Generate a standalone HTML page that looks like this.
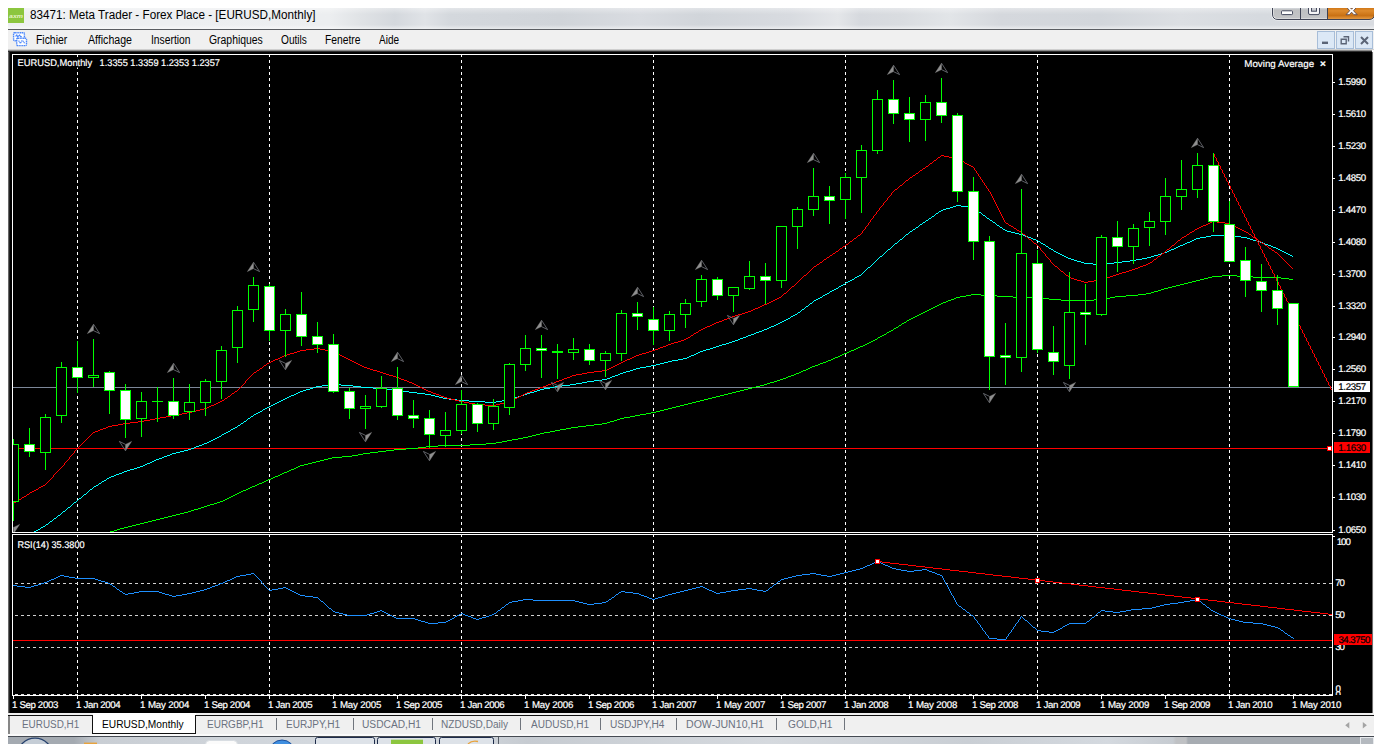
<!DOCTYPE html>
<html lang="fr"><head><meta charset="utf-8"><title>83471: Meta Trader - Forex Place - [EURUSD,Monthly]</title>
<style>
html,body{margin:0;padding:0;background:#fff;}
body{width:1382px;height:744px;position:relative;overflow:hidden;font-family:"Liberation Sans",sans-serif;}
.a{position:absolute;}
.t{position:absolute;white-space:nowrap;transform-origin:0 0;line-height:1;z-index:2;}
#title{left:8px;top:8px;width:1366px;height:21px;background:linear-gradient(180deg,rgba(255,255,255,.35) 0,rgba(255,255,255,0) 30%,rgba(255,255,255,0) 80%,rgba(255,255,255,.5) 100%),linear-gradient(90deg,#eef0f2 0px,#eceef0 322px,#e0e3e6 352px,#d4d8dd 387px,#e0e3e7 417px,#d4d8dd 442px,#d0d4d9 552px,#d9dce1 632px,#d1d5da 692px,#d8dbe0 782px,#e4e6e9 830px,#d6d9de 852px,#d9dce0 892px,#e2e5e8 942px,#d5d8dd 992px,#d2d6db 1092px,#dcdfe3 1172px,#d6dadf 1252px,#d8dbe0 1366px);}
#menu{left:8px;top:30px;width:1366px;height:20px;background:#f0f0f0;}
#mdi{left:8px;top:50px;width:1366px;height:663px;background:#000;}
#tabs{left:8px;top:713px;width:1366px;height:22px;background:#f0f0f0;}
#task{left:8px;top:736px;width:1366px;height:8px;background:linear-gradient(90deg,#a4aab1 0px,#a4aab1 66px,#c9ced4 92px,#d2d7dd 300px,#cdd2d8 480px,#c6cbd1 520px,#d5d9de 760px,#c9ced4 960px,#d4d9df 1100px,#c6cbd1 1165px,#bfc1c4 1168px,#bfc1c4 1178px,#a7acb2 1180px,#a7acb2 1352px);}
</style></head><body>
<div class="a" id="title"></div>
<div class="a" style="left:8px;top:29px;width:1366px;height:1px;background:#5a5d62"></div>
<div class="a" id="menu"></div>
<div class="a" id="mdi"></div>
<div class="a" id="tabs"></div>
<div class="a" id="task"></div>
<div class="t" style="left:29.5px;top:8.5px;font-size:12px;color:#000;transform:scaleX(0.9751)">83471: Meta Trader - Forex Place - [EURUSD,Monthly]</div>
<div class="t" style="left:36px;top:33.6px;font-size:12px;color:#000;transform:scaleX(0.8663)">Fichier</div>
<div class="t" style="left:88px;top:33.6px;font-size:12px;color:#000;transform:scaleX(0.8830)">Affichage</div>
<div class="t" style="left:151px;top:33.6px;font-size:12px;color:#000;transform:scaleX(0.8581)">Insertion</div>
<div class="t" style="left:208.6px;top:33.6px;font-size:12px;color:#000;transform:scaleX(0.8671)">Graphiques</div>
<div class="t" style="left:280.6px;top:33.6px;font-size:12px;color:#000;transform:scaleX(0.8440)">Outils</div>
<div class="t" style="left:325px;top:33.6px;font-size:12px;color:#000;transform:scaleX(0.8583)">Fenetre</div>
<div class="t" style="left:379px;top:33.6px;font-size:12px;color:#000;transform:scaleX(0.8322)">Aide</div>
<div class="t" style="left:22.2px;top:720px;font-size:10px;color:#6b7280;transform:scaleX(0.9897)">EURUSD,H1</div>
<div class="t" style="left:102px;top:720px;font-size:10px;color:#000;transform:scaleX(1.0184)">EURUSD,Monthly</div>
<div class="t" style="left:207px;top:720px;font-size:10px;color:#6b7280;transform:scaleX(0.9997)">EURGBP,H1</div>
<div class="t" style="left:286px;top:720px;font-size:10px;color:#6b7280;transform:scaleX(1.0049)">EURJPY,H1</div>
<div class="t" style="left:362px;top:720px;font-size:10px;color:#6b7280;transform:scaleX(1.0208)">USDCAD,H1</div>
<div class="t" style="left:441px;top:720px;font-size:10px;color:#6b7280;transform:scaleX(1.0049)">NZDUSD,Daily</div>
<div class="t" style="left:530.5px;top:720px;font-size:10px;color:#6b7280;transform:scaleX(1.0035)">AUDUSD,H1</div>
<div class="t" style="left:610px;top:720px;font-size:10px;color:#6b7280;transform:scaleX(1.0142)">USDJPY,H4</div>
<div class="t" style="left:686px;top:720px;font-size:10px;color:#6b7280;transform:scaleX(1.0581)">DOW-JUN10,H1</div>
<div class="t" style="left:787.5px;top:720px;font-size:10px;color:#6b7280;transform:scaleX(1.0135)">GOLD,H1</div>
<div class="a" style="left:0;top:0;width:1382px;height:744px"><svg id="ch" width="1382" height="744" viewBox="0 0 1382 744" shape-rendering="crispEdges">
<defs><clipPath id="cm"><rect x="13" y="55" width="1319" height="477"/></clipPath><clipPath id="cr"><rect x="13" y="535" width="1319" height="160"/></clipPath><linearGradient id="gb" x1="0" y1="0" x2="0" y2="1"><stop offset="0" stop-color="#d9dce0"/><stop offset=".45" stop-color="#d0d3d7"/><stop offset=".5" stop-color="#bfc0c2"/><stop offset="1" stop-color="#c4c5c7"/></linearGradient><linearGradient id="go" x1="0" y1="0" x2="0" y2="1"><stop offset="0" stop-color="#e39a3c"/><stop offset=".3" stop-color="#c86a08"/><stop offset=".55" stop-color="#dd8a2c"/><stop offset=".8" stop-color="#c97114"/><stop offset="1" stop-color="#e8a04a"/></linearGradient><linearGradient id="gl" x1="0" y1="0" x2="1" y2="0"><stop offset="0" stop-color="#8a8a8a"/><stop offset="1" stop-color="#000"/></linearGradient><linearGradient id="gr" x1="0" y1="0" x2="1" y2="0"><stop offset="0" stop-color="#000"/><stop offset="1" stop-color="#d0d0d0"/></linearGradient><linearGradient id="gt" x1="0" y1="0" x2="0" y2="1"><stop offset="0" stop-color="#f0f0f0"/><stop offset=".5" stop-color="#8c8c8c"/><stop offset="1" stop-color="#000"/></linearGradient></defs>
<rect x="8" y="49" width="1366" height="3" fill="url(#gt)" shape-rendering="auto"/>
<rect x="8" y="52" width="2" height="661" fill="url(#gl)" shape-rendering="auto"/>
<rect x="1372" y="50" width="2" height="663" fill="#fbfbfb" shape-rendering="auto"/><rect x="1371.8" y="52" width="1.3" height="661" fill="url(#gr)" shape-rendering="auto"/>
<line x1="77.5" y1="54" x2="77.5" y2="532" stroke="#fff" stroke-dasharray="3 3"/>
<line x1="77.5" y1="534" x2="77.5" y2="695" stroke="#fff" stroke-dasharray="3 3"/>
<line x1="269.5" y1="54" x2="269.5" y2="532" stroke="#fff" stroke-dasharray="3 3"/>
<line x1="269.5" y1="534" x2="269.5" y2="695" stroke="#fff" stroke-dasharray="3 3"/>
<line x1="461.5" y1="54" x2="461.5" y2="532" stroke="#fff" stroke-dasharray="3 3"/>
<line x1="461.5" y1="534" x2="461.5" y2="695" stroke="#fff" stroke-dasharray="3 3"/>
<line x1="653.5" y1="54" x2="653.5" y2="532" stroke="#fff" stroke-dasharray="3 3"/>
<line x1="653.5" y1="534" x2="653.5" y2="695" stroke="#fff" stroke-dasharray="3 3"/>
<line x1="845.5" y1="54" x2="845.5" y2="532" stroke="#fff" stroke-dasharray="3 3"/>
<line x1="845.5" y1="534" x2="845.5" y2="695" stroke="#fff" stroke-dasharray="3 3"/>
<line x1="1037.5" y1="54" x2="1037.5" y2="532" stroke="#fff" stroke-dasharray="3 3"/>
<line x1="1037.5" y1="534" x2="1037.5" y2="695" stroke="#fff" stroke-dasharray="3 3"/>
<line x1="1229.5" y1="54" x2="1229.5" y2="532" stroke="#fff" stroke-dasharray="3 3"/>
<line x1="1229.5" y1="534" x2="1229.5" y2="695" stroke="#fff" stroke-dasharray="3 3"/>
<g clip-path="url(#cm)">
<line x1="13" y1="387.5" x2="1332" y2="387.5" stroke="#7c8799"/>
<line x1="13" y1="448.5" x2="1332" y2="448.5" stroke="#f00"/>
<path d="M1222 275h15v1h-15zM1212 276h10v1h-10zM1237 276h16v1h-16zM1208 277h4v1h-4zM1253 277h28v1h-28zM1204 278h4v1h-4zM1281 278h8v1h-8zM1200 279h4v1h-4zM1289 279h4v1h-4zM1196 280h4v1h-4zM1192 281h4v1h-4zM1188 282h4v1h-4zM1184 283h4v1h-4zM1180 284h4v1h-4zM1176 285h4v1h-4zM1172 286h4v1h-4zM1168 287h4v1h-4zM1164 288h4v1h-4zM1161 289h3v1h-3zM1158 290h3v1h-3zM1154 291h4v1h-4zM1151 292h3v1h-3zM1146 293h5v1h-5zM971 294h10v1h-10zM1138 294h8v1h-8zM966 295h5v1h-5zM981 295h16v1h-16zM1126 295h12v1h-12zM960 296h6v1h-6zM997 296h16v1h-16zM1115 296h11v1h-11zM956 297h4v1h-4zM1013 297h28v1h-28zM1110 297h5v1h-5zM954 298h2v1h-2zM1041 298h8v1h-8zM1104 298h6v1h-6zM951 299h3v1h-3zM1049 299h12v1h-12zM1094 299h10v1h-10zM948 300h3v1h-3zM1061 300h33v1h-33zM946 301h2v1h-2zM943 302h3v1h-3zM941 303h2v1h-2zM939 304h2v1h-2zM937 305h2v1h-2zM935 306h2v1h-2zM933 307h2v1h-2zM931 308h2v1h-2zM929 309h2v1h-2zM927 310h2v1h-2zM925 311h2v1h-2zM923 312h2v1h-2zM921 313h2v1h-2zM919 314h2v1h-2zM917 315h2v1h-2zM915 316h2v1h-2zM913 317h2v1h-2zM911 318h2v1h-2zM909 319h2v1h-2zM907 320h2v1h-2zM906 321h1v1h-1zM904 322h2v1h-2zM902 323h2v1h-2zM901 324h1v1h-1zM899 325h2v1h-2zM898 326h1v1h-1zM896 327h2v1h-2zM894 328h2v1h-2zM893 329h1v1h-1zM891 330h2v1h-2zM889 331h2v1h-2zM887 332h2v1h-2zM886 333h1v1h-1zM884 334h2v1h-2zM882 335h2v1h-2zM880 336h2v1h-2zM878 337h2v1h-2zM877 338h1v1h-1zM875 339h2v1h-2zM873 340h2v1h-2zM871 341h2v1h-2zM869 342h2v1h-2zM867 343h2v1h-2zM865 344h2v1h-2zM863 345h2v1h-2zM860 346h3v1h-3zM858 347h2v1h-2zM856 348h2v1h-2zM854 349h2v1h-2zM851 350h3v1h-3zM849 351h2v1h-2zM847 352h2v1h-2zM844 353h3v1h-3zM842 354h2v1h-2zM840 355h2v1h-2zM838 356h2v1h-2zM835 357h3v1h-3zM833 358h2v1h-2zM831 359h2v1h-2zM828 360h3v1h-3zM826 361h2v1h-2zM823 362h3v1h-3zM820 363h3v1h-3zM818 364h2v1h-2zM815 365h3v1h-3zM812 366h3v1h-3zM810 367h2v1h-2zM808 368h2v1h-2zM806 369h2v1h-2zM803 370h3v1h-3zM801 371h2v1h-2zM799 372h2v1h-2zM796 373h3v1h-3zM794 374h2v1h-2zM791 375h3v1h-3zM788 376h3v1h-3zM786 377h2v1h-2zM783 378h3v1h-3zM780 379h3v1h-3zM777 380h3v1h-3zM774 381h3v1h-3zM770 382h4v1h-4zM767 383h3v1h-3zM764 384h3v1h-3zM760 385h4v1h-4zM756 386h4v1h-4zM752 387h4v1h-4zM748 388h4v1h-4zM744 389h4v1h-4zM740 390h4v1h-4zM736 391h4v1h-4zM732 392h4v1h-4zM728 393h4v1h-4zM724 394h4v1h-4zM720 395h4v1h-4zM716 396h4v1h-4zM712 397h4v1h-4zM708 398h4v1h-4zM704 399h4v1h-4zM700 400h4v1h-4zM696 401h4v1h-4zM692 402h4v1h-4zM688 403h4v1h-4zM684 404h4v1h-4zM680 405h4v1h-4zM676 406h4v1h-4zM672 407h4v1h-4zM668 408h4v1h-4zM664 409h4v1h-4zM660 410h4v1h-4zM656 411h4v1h-4zM651 412h5v1h-5zM646 413h5v1h-5zM640 414h6v1h-6zM635 415h5v1h-5zM630 416h5v1h-5zM624 417h6v1h-6zM620 418h4v1h-4zM617 419h3v1h-3zM614 420h3v1h-3zM610 421h4v1h-4zM607 422h3v1h-3zM602 423h5v1h-5zM594 424h8v1h-8zM586 425h8v1h-8zM578 426h8v1h-8zM571 427h7v1h-7zM566 428h5v1h-5zM560 429h6v1h-6zM555 430h5v1h-5zM550 431h5v1h-5zM544 432h6v1h-6zM540 433h4v1h-4zM536 434h4v1h-4zM532 435h4v1h-4zM528 436h4v1h-4zM523 437h5v1h-5zM518 438h5v1h-5zM512 439h6v1h-6zM507 440h5v1h-5zM502 441h5v1h-5zM496 442h6v1h-6zM486 443h10v1h-10zM470 444h16v1h-16zM438 445h32v1h-32zM426 446h12v1h-12zM418 447h8v1h-8zM406 448h12v1h-12zM394 449h12v1h-12zM386 450h8v1h-8zM378 451h8v1h-8zM370 452h8v1h-8zM363 453h7v1h-7zM358 454h5v1h-5zM352 455h6v1h-6zM342 456h10v1h-10zM332 457h10v1h-10zM328 458h4v1h-4zM324 459h4v1h-4zM320 460h4v1h-4zM316 461h4v1h-4zM312 462h4v1h-4zM308 463h4v1h-4zM304 464h4v1h-4zM300 465h4v1h-4zM298 466h2v1h-2zM296 467h2v1h-2zM294 468h2v1h-2zM291 469h3v1h-3zM289 470h2v1h-2zM287 471h2v1h-2zM284 472h3v1h-3zM282 473h2v1h-2zM280 474h2v1h-2zM278 475h2v1h-2zM275 476h3v1h-3zM273 477h2v1h-2zM271 478h2v1h-2zM268 479h3v1h-3zM266 480h2v1h-2zM264 481h2v1h-2zM262 482h2v1h-2zM259 483h3v1h-3zM257 484h2v1h-2zM255 485h2v1h-2zM252 486h3v1h-3zM250 487h2v1h-2zM248 488h2v1h-2zM246 489h2v1h-2zM243 490h3v1h-3zM241 491h2v1h-2zM239 492h2v1h-2zM237 493h2v1h-2zM235 494h2v1h-2zM233 495h2v1h-2zM231 496h2v1h-2zM229 497h2v1h-2zM227 498h2v1h-2zM225 499h2v1h-2zM223 500h2v1h-2zM220 501h3v1h-3zM217 502h3v1h-3zM214 503h3v1h-3zM210 504h4v1h-4zM207 505h3v1h-3zM204 506h3v1h-3zM201 507h3v1h-3zM198 508h3v1h-3zM194 509h4v1h-4zM191 510h3v1h-3zM188 511h3v1h-3zM184 512h4v1h-4zM180 513h4v1h-4zM176 514h4v1h-4zM172 515h4v1h-4zM168 516h4v1h-4zM164 517h4v1h-4zM160 518h4v1h-4zM156 519h4v1h-4zM152 520h4v1h-4zM148 521h4v1h-4zM144 522h4v1h-4zM140 523h4v1h-4zM136 524h4v1h-4zM132 525h4v1h-4zM128 526h4v1h-4zM124 527h4v1h-4zM120 528h4v1h-4zM117 529h3v1h-3zM114 530h3v1h-3zM110 531h4v1h-4zM108 532h2v1h-2z" fill="#0f0"/>
<path d="M956 205h5v1h-5zM953 206h3v1h-3zM961 206h8v1h-8zM950 207h3v1h-3zM969 207h5v1h-5zM946 208h4v1h-4zM974 208h1v1h-1zM943 209h3v1h-3zM975 209h2v1h-2zM941 210h2v1h-2zM977 210h1v1h-1zM939 211h2v1h-2zM978 211h1v1h-1zM938 212h1v1h-1zM979 212h2v1h-2zM936 213h2v1h-2zM981 213h1v1h-1zM935 214h1v1h-1zM982 214h1v1h-1zM934 215h1v1h-1zM983 215h2v1h-2zM932 216h2v1h-2zM985 216h1v1h-1zM931 217h1v1h-1zM986 217h1v1h-1zM929 218h2v1h-2zM987 218h2v1h-2zM928 219h1v1h-1zM989 219h1v1h-1zM926 220h2v1h-2zM990 220h2v1h-2zM925 221h1v1h-1zM992 221h1v1h-1zM923 222h2v1h-2zM993 222h2v1h-2zM922 223h1v1h-1zM995 223h1v1h-1zM920 224h2v1h-2zM996 224h1v1h-1zM919 225h1v1h-1zM997 225h2v1h-2zM918 226h1v1h-1zM999 226h1v1h-1zM916 227h2v1h-2zM1000 227h2v1h-2zM915 228h1v1h-1zM1002 228h1v1h-1zM913 229h2v1h-2zM1003 229h2v1h-2zM912 230h1v1h-1zM1005 230h2v1h-2zM910 231h2v1h-2zM1007 231h4v1h-4zM909 232h1v1h-1zM1011 232h4v1h-4zM908 233h1v1h-1zM1015 233h4v1h-4zM906 234h2v1h-2zM1019 234h4v1h-4zM905 235h1v1h-1zM1023 235h2v1h-2zM1211 235h22v1h-22zM904 236h1v1h-1zM1025 236h3v1h-3zM1206 236h5v1h-5zM1233 236h8v1h-8zM903 237h1v1h-1zM1028 237h3v1h-3zM1200 237h6v1h-6zM1241 237h6v1h-6zM902 238h1v1h-1zM1031 238h2v1h-2zM1196 238h4v1h-4zM1247 238h3v1h-3zM900 239h2v1h-2zM1033 239h3v1h-3zM1194 239h2v1h-2zM1250 239h3v1h-3zM899 240h1v1h-1zM1036 240h2v1h-2zM1192 240h2v1h-2zM1253 240h4v1h-4zM898 241h1v1h-1zM1038 241h2v1h-2zM1190 241h2v1h-2zM1257 241h3v1h-3zM897 242h1v1h-1zM1040 242h1v1h-1zM1187 242h3v1h-3zM1260 242h3v1h-3zM895 243h2v1h-2zM1041 243h2v1h-2zM1185 243h2v1h-2zM1263 243h2v1h-2zM894 244h1v1h-1zM1043 244h2v1h-2zM1183 244h2v1h-2zM1265 244h3v1h-3zM893 245h1v1h-1zM1045 245h1v1h-1zM1180 245h3v1h-3zM1268 245h3v1h-3zM892 246h1v1h-1zM1046 246h2v1h-2zM1178 246h2v1h-2zM1271 246h2v1h-2zM891 247h1v1h-1zM1048 247h1v1h-1zM1176 247h2v1h-2zM1273 247h3v1h-3zM890 248h1v1h-1zM1049 248h2v1h-2zM1174 248h2v1h-2zM1276 248h2v1h-2zM888 249h2v1h-2zM1051 249h2v1h-2zM1171 249h3v1h-3zM1278 249h2v1h-2zM887 250h1v1h-1zM1053 250h1v1h-1zM1169 250h2v1h-2zM1280 250h2v1h-2zM886 251h1v1h-1zM1054 251h2v1h-2zM1167 251h2v1h-2zM1282 251h2v1h-2zM885 252h1v1h-1zM1056 252h2v1h-2zM1164 252h3v1h-3zM1284 252h2v1h-2zM884 253h1v1h-1zM1058 253h2v1h-2zM1161 253h3v1h-3zM1286 253h2v1h-2zM883 254h1v1h-1zM1060 254h2v1h-2zM1158 254h3v1h-3zM1288 254h2v1h-2zM882 255h1v1h-1zM1062 255h2v1h-2zM1154 255h4v1h-4zM1290 255h2v1h-2zM880 256h2v1h-2zM1064 256h2v1h-2zM1151 256h3v1h-3zM1292 256h1v1h-1zM879 257h1v1h-1zM1066 257h2v1h-2zM1147 257h4v1h-4zM878 258h1v1h-1zM1068 258h3v1h-3zM1142 258h5v1h-5zM877 259h1v1h-1zM1071 259h3v1h-3zM1136 259h6v1h-6zM876 260h1v1h-1zM1074 260h3v1h-3zM1130 260h6v1h-6zM875 261h1v1h-1zM1077 261h4v1h-4zM1122 261h8v1h-8zM874 262h1v1h-1zM1081 262h3v1h-3zM1114 262h8v1h-8zM873 263h1v1h-1zM1084 263h9v1h-9zM1106 263h8v1h-8zM872 264h1v1h-1zM1093 264h13v1h-13zM871 265h1v1h-1zM870 266h1v1h-1zM868 267h2v1h-2zM867 268h1v1h-1zM866 269h1v1h-1zM865 270h1v1h-1zM864 271h1v1h-1zM863 272h1v1h-1zM862 273h1v1h-1zM861 274h1v1h-1zM859 275h2v1h-2zM857 276h2v1h-2zM855 277h2v1h-2zM854 278h1v1h-1zM852 279h2v1h-2zM850 280h2v1h-2zM848 281h2v1h-2zM846 282h2v1h-2zM845 283h1v1h-1zM843 284h2v1h-2zM841 285h2v1h-2zM839 286h2v1h-2zM838 287h1v1h-1zM836 288h2v1h-2zM834 289h2v1h-2zM832 290h2v1h-2zM830 291h2v1h-2zM829 292h1v1h-1zM827 293h2v1h-2zM825 294h2v1h-2zM823 295h2v1h-2zM822 296h1v1h-1zM820 297h2v1h-2zM818 298h2v1h-2zM816 299h2v1h-2zM814 300h2v1h-2zM813 301h1v1h-1zM812 302h1v1h-1zM810 303h2v1h-2zM809 304h1v1h-1zM808 305h1v1h-1zM806 306h2v1h-2zM805 307h1v1h-1zM804 308h1v1h-1zM802 309h2v1h-2zM801 310h1v1h-1zM800 311h1v1h-1zM798 312h2v1h-2zM797 313h1v1h-1zM795 314h2v1h-2zM793 315h2v1h-2zM791 316h2v1h-2zM790 317h1v1h-1zM788 318h2v1h-2zM786 319h2v1h-2zM784 320h2v1h-2zM782 321h2v1h-2zM780 322h2v1h-2zM778 323h2v1h-2zM776 324h2v1h-2zM774 325h2v1h-2zM771 326h3v1h-3zM769 327h2v1h-2zM767 328h2v1h-2zM764 329h3v1h-3zM762 330h2v1h-2zM759 331h3v1h-3zM756 332h3v1h-3zM754 333h2v1h-2zM751 334h3v1h-3zM748 335h3v1h-3zM746 336h2v1h-2zM743 337h3v1h-3zM740 338h3v1h-3zM738 339h2v1h-2zM735 340h3v1h-3zM732 341h3v1h-3zM729 342h3v1h-3zM726 343h3v1h-3zM722 344h4v1h-4zM719 345h3v1h-3zM716 346h3v1h-3zM713 347h3v1h-3zM710 348h3v1h-3zM706 349h4v1h-4zM703 350h3v1h-3zM700 351h3v1h-3zM698 352h2v1h-2zM696 353h2v1h-2zM694 354h2v1h-2zM691 355h3v1h-3zM689 356h2v1h-2zM687 357h2v1h-2zM683 358h4v1h-4zM678 359h5v1h-5zM672 360h6v1h-6zM668 361h4v1h-4zM664 362h4v1h-4zM660 363h4v1h-4zM656 364h4v1h-4zM651 365h5v1h-5zM646 366h5v1h-5zM640 367h6v1h-6zM636 368h4v1h-4zM633 369h3v1h-3zM630 370h3v1h-3zM626 371h4v1h-4zM623 372h3v1h-3zM620 373h3v1h-3zM618 374h2v1h-2zM615 375h3v1h-3zM612 376h3v1h-3zM610 377h2v1h-2zM607 378h3v1h-3zM602 379h5v1h-5zM594 380h8v1h-8zM587 381h7v1h-7zM582 382h5v1h-5zM576 383h6v1h-6zM330 384h11v1h-11zM570 384h6v1h-6zM322 385h8v1h-8zM341 385h12v1h-12zM562 385h8v1h-8zM316 386h6v1h-6zM353 386h8v1h-8zM555 386h7v1h-7zM313 387h3v1h-3zM361 387h12v1h-12zM550 387h5v1h-5zM310 388h3v1h-3zM373 388h12v1h-12zM544 388h6v1h-6zM306 389h4v1h-4zM385 389h8v1h-8zM540 389h4v1h-4zM303 390h3v1h-3zM393 390h8v1h-8zM537 390h3v1h-3zM300 391h3v1h-3zM401 391h8v1h-8zM534 391h3v1h-3zM298 392h2v1h-2zM409 392h8v1h-8zM530 392h4v1h-4zM296 393h2v1h-2zM417 393h8v1h-8zM527 393h3v1h-3zM294 394h2v1h-2zM425 394h6v1h-6zM524 394h3v1h-3zM291 395h3v1h-3zM431 395h4v1h-4zM521 395h3v1h-3zM289 396h2v1h-2zM435 396h4v1h-4zM518 396h3v1h-3zM287 397h2v1h-2zM439 397h4v1h-4zM514 397h4v1h-4zM285 398h2v1h-2zM443 398h6v1h-6zM511 398h3v1h-3zM283 399h2v1h-2zM449 399h8v1h-8zM507 399h4v1h-4zM281 400h2v1h-2zM457 400h12v1h-12zM502 400h5v1h-5zM279 401h2v1h-2zM469 401h16v1h-16zM496 401h6v1h-6zM277 402h2v1h-2zM485 402h11v1h-11zM275 403h2v1h-2zM273 404h2v1h-2zM271 405h2v1h-2zM269 406h2v1h-2zM267 407h2v1h-2zM265 408h2v1h-2zM263 409h2v1h-2zM262 410h1v1h-1zM260 411h2v1h-2zM258 412h2v1h-2zM256 413h2v1h-2zM254 414h2v1h-2zM253 415h1v1h-1zM251 416h2v1h-2zM250 417h1v1h-1zM248 418h2v1h-2zM247 419h1v1h-1zM246 420h1v1h-1zM244 421h2v1h-2zM243 422h1v1h-1zM241 423h2v1h-2zM240 424h1v1h-1zM238 425h2v1h-2zM237 426h1v1h-1zM235 427h2v1h-2zM233 428h2v1h-2zM231 429h2v1h-2zM230 430h1v1h-1zM228 431h2v1h-2zM226 432h2v1h-2zM224 433h2v1h-2zM222 434h2v1h-2zM221 435h1v1h-1zM219 436h2v1h-2zM217 437h2v1h-2zM215 438h2v1h-2zM213 439h2v1h-2zM211 440h2v1h-2zM209 441h2v1h-2zM207 442h2v1h-2zM204 443h3v1h-3zM202 444h2v1h-2zM199 445h3v1h-3zM196 446h3v1h-3zM194 447h2v1h-2zM191 448h3v1h-3zM188 449h3v1h-3zM184 450h4v1h-4zM180 451h4v1h-4zM176 452h4v1h-4zM172 453h4v1h-4zM170 454h2v1h-2zM167 455h3v1h-3zM164 456h3v1h-3zM162 457h2v1h-2zM159 458h3v1h-3zM156 459h3v1h-3zM154 460h2v1h-2zM152 461h2v1h-2zM150 462h2v1h-2zM147 463h3v1h-3zM145 464h2v1h-2zM143 465h2v1h-2zM140 466h3v1h-3zM137 467h3v1h-3zM134 468h3v1h-3zM130 469h4v1h-4zM127 470h3v1h-3zM124 471h3v1h-3zM122 472h2v1h-2zM119 473h3v1h-3zM116 474h3v1h-3zM114 475h2v1h-2zM111 476h3v1h-3zM109 477h2v1h-2zM107 478h2v1h-2zM106 479h1v1h-1zM104 480h2v1h-2zM102 481h2v1h-2zM101 482h1v1h-1zM99 483h2v1h-2zM98 484h1v1h-1zM96 485h2v1h-2zM94 486h2v1h-2zM93 487h1v1h-1zM92 488h1v1h-1zM90 489h2v1h-2zM89 490h1v1h-1zM88 491h1v1h-1zM87 492h1v1h-1zM86 493h1v1h-1zM84 494h2v1h-2zM83 495h1v1h-1zM82 496h1v1h-1zM81 497h1v1h-1zM79 498h2v1h-2zM78 499h1v1h-1zM77 500h1v1h-1zM76 501h1v1h-1zM74 502h2v1h-2zM73 503h1v1h-1zM72 504h1v1h-1zM71 505h1v1h-1zM70 506h1v1h-1zM68 507h2v1h-2zM67 508h1v1h-1zM66 509h1v1h-1zM65 510h1v1h-1zM63 511h2v1h-2zM62 512h1v1h-1zM61 513h1v1h-1zM60 514h1v1h-1zM58 515h2v1h-2zM57 516h1v1h-1zM56 517h1v1h-1zM54 518h2v1h-2zM53 519h1v1h-1zM52 520h1v1h-1zM50 521h2v1h-2zM49 522h1v1h-1zM48 523h1v1h-1zM46 524h2v1h-2zM45 525h1v1h-1zM43 526h2v1h-2zM41 527h2v1h-2zM40 528h1v1h-1zM38 529h2v1h-2zM36 530h2v1h-2zM34 531h2v1h-2zM33 532h1v1h-1z" fill="#0ff"/>
<path d="M941 155h3v1h-3zM940 156h1v1h-1zM944 156h5v1h-5zM938 157h2v1h-2zM949 157h6v1h-6zM937 158h1v1h-1zM955 158h3v1h-3zM936 159h1v1h-1zM958 159h2v1h-2zM934 160h2v1h-2zM960 160h2v1h-2zM933 161h1v1h-1zM962 161h2v1h-2zM932 162h1v1h-1zM964 162h1v1h-1zM930 163h2v1h-2zM965 163h2v1h-2zM929 164h1v1h-1zM967 164h2v1h-2zM928 165h1v1h-1zM969 165h2v1h-2zM926 166h2v1h-2zM971 166h2v1h-2zM925 167h1v1h-1zM973 167h1v1h-1zM923 168h2v1h-2zM974 168h1v1h-1zM922 169h1v1h-1zM974 169h1v1h-1zM920 170h2v1h-2zM975 170h1v1h-1zM919 171h1v1h-1zM976 171h1v1h-1zM918 172h1v1h-1zM976 172h1v1h-1zM916 173h2v1h-2zM977 173h1v1h-1zM915 174h1v1h-1zM978 174h1v1h-1zM913 175h2v1h-2zM978 175h1v1h-1zM912 176h1v1h-1zM979 176h1v1h-1zM910 177h2v1h-2zM980 177h1v1h-1zM909 178h1v1h-1zM980 178h1v1h-1zM908 179h1v1h-1zM981 179h1v1h-1zM906 180h2v1h-2zM982 180h1v1h-1zM905 181h1v1h-1zM982 181h1v1h-1zM904 182h1v1h-1zM983 182h1v1h-1zM903 183h1v1h-1zM984 183h1v1h-1zM902 184h1v1h-1zM984 184h1v1h-1zM900 185h2v1h-2zM985 185h1v1h-1zM899 186h1v1h-1zM986 186h1v1h-1zM898 187h1v1h-1zM986 187h1v1h-1zM897 188h1v1h-1zM987 188h1v1h-1zM895 189h2v1h-2zM988 189h1v1h-1zM894 190h1v1h-1zM988 190h1v1h-1zM893 191h1v1h-1zM989 191h1v1h-1zM892 192h1v1h-1zM990 192h1v1h-1zM891 193h1v1h-1zM990 193h1v1h-1zM891 194h1v1h-1zM991 194h1v1h-1zM890 195h1v1h-1zM991 195h1v1h-1zM889 196h1v1h-1zM992 196h1v1h-1zM888 197h1v1h-1zM992 197h1v1h-1zM887 198h1v1h-1zM993 198h1v1h-1zM887 199h1v1h-1zM993 199h1v1h-1zM886 200h1v1h-1zM994 200h1v1h-1zM885 201h1v1h-1zM994 201h1v1h-1zM884 202h1v1h-1zM995 202h1v1h-1zM883 203h1v1h-1zM995 203h1v1h-1zM883 204h1v1h-1zM996 204h1v1h-1zM882 205h1v1h-1zM996 205h1v1h-1zM881 206h1v1h-1zM997 206h1v1h-1zM880 207h1v1h-1zM997 207h1v1h-1zM879 208h1v1h-1zM998 208h1v1h-1zM879 209h1v1h-1zM998 209h1v1h-1zM878 210h1v1h-1zM999 210h1v1h-1zM877 211h1v1h-1zM999 211h1v1h-1zM876 212h1v1h-1zM1000 212h1v1h-1zM876 213h1v1h-1zM1000 213h1v1h-1zM875 214h1v1h-1zM1001 214h1v1h-1zM874 215h1v1h-1zM1001 215h1v1h-1zM873 216h1v1h-1zM1002 216h1v1h-1zM873 217h1v1h-1zM1002 217h1v1h-1zM872 218h1v1h-1zM1003 218h1v1h-1zM871 219h1v1h-1zM1003 219h1v1h-1zM870 220h1v1h-1zM1004 220h1v1h-1zM870 221h1v1h-1zM1004 221h1v1h-1zM1212 221h5v1h-5zM869 222h1v1h-1zM1005 222h1v1h-1zM1210 222h2v1h-2zM1217 222h8v1h-8zM868 223h1v1h-1zM1006 223h2v1h-2zM1208 223h2v1h-2zM1225 223h5v1h-5zM868 224h1v1h-1zM1008 224h1v1h-1zM1206 224h2v1h-2zM1230 224h2v1h-2zM867 225h1v1h-1zM1009 225h2v1h-2zM1203 225h3v1h-3zM1232 225h2v1h-2zM866 226h1v1h-1zM1011 226h2v1h-2zM1201 226h2v1h-2zM1234 226h2v1h-2zM865 227h1v1h-1zM1013 227h1v1h-1zM1199 227h2v1h-2zM1236 227h2v1h-2zM865 228h1v1h-1zM1014 228h2v1h-2zM1197 228h2v1h-2zM1238 228h2v1h-2zM864 229h1v1h-1zM1016 229h1v1h-1zM1195 229h2v1h-2zM1240 229h2v1h-2zM863 230h1v1h-1zM1017 230h2v1h-2zM1194 230h1v1h-1zM1242 230h2v1h-2zM862 231h1v1h-1zM1019 231h2v1h-2zM1192 231h2v1h-2zM1244 231h2v1h-2zM862 232h1v1h-1zM1021 232h1v1h-1zM1190 232h2v1h-2zM1246 232h2v1h-2zM861 233h1v1h-1zM1022 233h1v1h-1zM1189 233h1v1h-1zM1248 233h1v1h-1zM860 234h1v1h-1zM1023 234h2v1h-2zM1187 234h2v1h-2zM1249 234h2v1h-2zM858 235h2v1h-2zM1025 235h1v1h-1zM1186 235h1v1h-1zM1251 235h1v1h-1zM857 236h1v1h-1zM1026 236h1v1h-1zM1184 236h2v1h-2zM1252 236h1v1h-1zM856 237h1v1h-1zM1027 237h1v1h-1zM1182 237h2v1h-2zM1253 237h2v1h-2zM854 238h2v1h-2zM1028 238h1v1h-1zM1181 238h1v1h-1zM1255 238h1v1h-1zM853 239h1v1h-1zM1029 239h2v1h-2zM1180 239h1v1h-1zM1256 239h2v1h-2zM852 240h1v1h-1zM1031 240h1v1h-1zM1178 240h2v1h-2zM1258 240h1v1h-1zM850 241h2v1h-2zM1032 241h1v1h-1zM1177 241h1v1h-1zM1259 241h2v1h-2zM849 242h1v1h-1zM1033 242h1v1h-1zM1176 242h1v1h-1zM1261 242h1v1h-1zM848 243h1v1h-1zM1034 243h2v1h-2zM1175 243h1v1h-1zM1262 243h2v1h-2zM846 244h2v1h-2zM1036 244h1v1h-1zM1174 244h1v1h-1zM1264 244h1v1h-1zM845 245h1v1h-1zM1037 245h1v1h-1zM1172 245h2v1h-2zM1265 245h2v1h-2zM843 246h2v1h-2zM1038 246h1v1h-1zM1171 246h1v1h-1zM1267 246h1v1h-1zM842 247h1v1h-1zM1039 247h1v1h-1zM1170 247h1v1h-1zM1268 247h1v1h-1zM840 248h2v1h-2zM1040 248h1v1h-1zM1169 248h1v1h-1zM1269 248h2v1h-2zM839 249h1v1h-1zM1040 249h1v1h-1zM1167 249h2v1h-2zM1271 249h1v1h-1zM838 250h1v1h-1zM1041 250h1v1h-1zM1166 250h1v1h-1zM1272 250h2v1h-2zM836 251h2v1h-2zM1042 251h1v1h-1zM1165 251h1v1h-1zM1274 251h1v1h-1zM835 252h1v1h-1zM1043 252h1v1h-1zM1164 252h1v1h-1zM1275 252h2v1h-2zM833 253h2v1h-2zM1044 253h1v1h-1zM1162 253h2v1h-2zM1277 253h1v1h-1zM832 254h1v1h-1zM1045 254h1v1h-1zM1161 254h1v1h-1zM1278 254h1v1h-1zM830 255h2v1h-2zM1045 255h1v1h-1zM1160 255h1v1h-1zM1279 255h1v1h-1zM829 256h1v1h-1zM1046 256h1v1h-1zM1158 256h2v1h-2zM1280 256h1v1h-1zM827 257h2v1h-2zM1047 257h1v1h-1zM1157 257h1v1h-1zM1281 257h1v1h-1zM826 258h1v1h-1zM1048 258h1v1h-1zM1156 258h1v1h-1zM1282 258h1v1h-1zM824 259h2v1h-2zM1049 259h1v1h-1zM1154 259h2v1h-2zM1283 259h1v1h-1zM823 260h1v1h-1zM1050 260h1v1h-1zM1153 260h1v1h-1zM1284 260h1v1h-1zM822 261h1v1h-1zM1050 261h1v1h-1zM1152 261h1v1h-1zM1285 261h1v1h-1zM820 262h2v1h-2zM1051 262h1v1h-1zM1150 262h2v1h-2zM1286 262h1v1h-1zM819 263h1v1h-1zM1052 263h1v1h-1zM1148 263h2v1h-2zM1287 263h1v1h-1zM817 264h2v1h-2zM1053 264h1v1h-1zM1146 264h2v1h-2zM1288 264h1v1h-1zM816 265h1v1h-1zM1054 265h1v1h-1zM1143 265h3v1h-3zM1289 265h1v1h-1zM814 266h2v1h-2zM1055 266h2v1h-2zM1140 266h3v1h-3zM1290 266h1v1h-1zM813 267h1v1h-1zM1057 267h1v1h-1zM1138 267h2v1h-2zM1291 267h1v1h-1zM812 268h1v1h-1zM1058 268h1v1h-1zM1135 268h3v1h-3zM1292 268h1v1h-1zM811 269h1v1h-1zM1059 269h1v1h-1zM1132 269h3v1h-3zM810 270h1v1h-1zM1060 270h1v1h-1zM1129 270h3v1h-3zM809 271h1v1h-1zM1061 271h2v1h-2zM1126 271h3v1h-3zM808 272h1v1h-1zM1063 272h1v1h-1zM1122 272h4v1h-4zM807 273h1v1h-1zM1064 273h1v1h-1zM1119 273h3v1h-3zM806 274h1v1h-1zM1065 274h1v1h-1zM1116 274h3v1h-3zM804 275h2v1h-2zM1066 275h2v1h-2zM1113 275h3v1h-3zM803 276h1v1h-1zM1068 276h1v1h-1zM1110 276h3v1h-3zM802 277h1v1h-1zM1069 277h2v1h-2zM1106 277h4v1h-4zM801 278h1v1h-1zM1071 278h3v1h-3zM1103 278h3v1h-3zM800 279h1v1h-1zM1074 279h3v1h-3zM1099 279h4v1h-4zM799 280h1v1h-1zM1077 280h4v1h-4zM1094 280h5v1h-5zM798 281h1v1h-1zM1081 281h3v1h-3zM1088 281h6v1h-6zM797 282h1v1h-1zM1084 282h4v1h-4zM796 283h1v1h-1zM795 284h1v1h-1zM794 285h1v1h-1zM792 286h2v1h-2zM791 287h1v1h-1zM790 288h1v1h-1zM789 289h1v1h-1zM788 290h1v1h-1zM787 291h1v1h-1zM786 292h1v1h-1zM784 293h2v1h-2zM783 294h1v1h-1zM782 295h1v1h-1zM781 296h1v1h-1zM779 297h2v1h-2zM777 298h2v1h-2zM775 299h2v1h-2zM773 300h2v1h-2zM771 301h2v1h-2zM769 302h2v1h-2zM767 303h2v1h-2zM764 304h3v1h-3zM762 305h2v1h-2zM760 306h2v1h-2zM758 307h2v1h-2zM755 308h3v1h-3zM753 309h2v1h-2zM751 310h2v1h-2zM748 311h3v1h-3zM745 312h3v1h-3zM742 313h3v1h-3zM738 314h4v1h-4zM735 315h3v1h-3zM732 316h3v1h-3zM730 317h2v1h-2zM727 318h3v1h-3zM724 319h3v1h-3zM722 320h2v1h-2zM719 321h3v1h-3zM716 322h3v1h-3zM714 323h2v1h-2zM712 324h2v1h-2zM710 325h2v1h-2zM707 326h3v1h-3zM705 327h2v1h-2zM703 328h2v1h-2zM701 329h2v1h-2zM699 330h2v1h-2zM698 331h1v1h-1zM696 332h2v1h-2zM694 333h2v1h-2zM693 334h1v1h-1zM691 335h2v1h-2zM690 336h1v1h-1zM688 337h2v1h-2zM686 338h2v1h-2zM684 339h2v1h-2zM681 340h3v1h-3zM678 341h3v1h-3zM674 342h4v1h-4zM671 343h3v1h-3zM668 344h3v1h-3zM666 345h2v1h-2zM663 346h3v1h-3zM660 347h3v1h-3zM314 348h6v1h-6zM658 348h2v1h-2zM306 349h8v1h-8zM320 349h5v1h-5zM655 349h3v1h-3zM300 350h6v1h-6zM325 350h6v1h-6zM652 350h3v1h-3zM297 351h3v1h-3zM331 351h3v1h-3zM649 351h3v1h-3zM294 352h3v1h-3zM334 352h2v1h-2zM646 352h3v1h-3zM290 353h4v1h-4zM336 353h2v1h-2zM642 353h4v1h-4zM287 354h3v1h-3zM338 354h2v1h-2zM639 354h3v1h-3zM284 355h3v1h-3zM340 355h2v1h-2zM636 355h3v1h-3zM282 356h2v1h-2zM342 356h2v1h-2zM634 356h2v1h-2zM280 357h2v1h-2zM344 357h2v1h-2zM632 357h2v1h-2zM278 358h2v1h-2zM346 358h2v1h-2zM630 358h2v1h-2zM275 359h3v1h-3zM348 359h2v1h-2zM627 359h3v1h-3zM273 360h2v1h-2zM350 360h2v1h-2zM625 360h2v1h-2zM271 361h2v1h-2zM352 361h2v1h-2zM623 361h2v1h-2zM269 362h2v1h-2zM354 362h2v1h-2zM621 362h2v1h-2zM267 363h2v1h-2zM356 363h2v1h-2zM619 363h2v1h-2zM266 364h1v1h-1zM358 364h2v1h-2zM617 364h2v1h-2zM264 365h2v1h-2zM360 365h2v1h-2zM615 365h2v1h-2zM263 366h1v1h-1zM362 366h2v1h-2zM613 366h2v1h-2zM262 367h1v1h-1zM364 367h3v1h-3zM611 367h2v1h-2zM260 368h2v1h-2zM367 368h3v1h-3zM609 368h2v1h-2zM259 369h1v1h-1zM370 369h3v1h-3zM607 369h2v1h-2zM257 370h2v1h-2zM373 370h4v1h-4zM602 370h5v1h-5zM256 371h1v1h-1zM377 371h3v1h-3zM594 371h8v1h-8zM254 372h2v1h-2zM380 372h3v1h-3zM587 372h7v1h-7zM253 373h1v1h-1zM383 373h3v1h-3zM582 373h5v1h-5zM252 374h1v1h-1zM386 374h3v1h-3zM576 374h6v1h-6zM251 375h1v1h-1zM389 375h4v1h-4zM572 375h4v1h-4zM250 376h1v1h-1zM393 376h3v1h-3zM570 376h2v1h-2zM249 377h1v1h-1zM396 377h3v1h-3zM567 377h3v1h-3zM248 378h1v1h-1zM399 378h2v1h-2zM564 378h3v1h-3zM247 379h1v1h-1zM401 379h3v1h-3zM562 379h2v1h-2zM246 380h1v1h-1zM404 380h3v1h-3zM559 380h3v1h-3zM245 381h1v1h-1zM407 381h2v1h-2zM556 381h3v1h-3zM245 382h1v1h-1zM409 382h3v1h-3zM554 382h2v1h-2zM244 383h1v1h-1zM412 383h2v1h-2zM551 383h3v1h-3zM243 384h1v1h-1zM414 384h2v1h-2zM548 384h3v1h-3zM242 385h1v1h-1zM416 385h2v1h-2zM546 385h2v1h-2zM241 386h1v1h-1zM418 386h2v1h-2zM543 386h3v1h-3zM240 387h1v1h-1zM420 387h2v1h-2zM540 387h3v1h-3zM239 388h1v1h-1zM422 388h2v1h-2zM538 388h2v1h-2zM238 389h1v1h-1zM424 389h2v1h-2zM535 389h3v1h-3zM237 390h1v1h-1zM426 390h2v1h-2zM532 390h3v1h-3zM235 391h2v1h-2zM428 391h3v1h-3zM530 391h2v1h-2zM234 392h1v1h-1zM431 392h2v1h-2zM527 392h3v1h-3zM232 393h2v1h-2zM433 393h3v1h-3zM525 393h2v1h-2zM231 394h1v1h-1zM436 394h3v1h-3zM523 394h2v1h-2zM230 395h1v1h-1zM439 395h2v1h-2zM521 395h2v1h-2zM228 396h2v1h-2zM441 396h3v1h-3zM519 396h2v1h-2zM227 397h1v1h-1zM444 397h3v1h-3zM517 397h2v1h-2zM225 398h2v1h-2zM447 398h4v1h-4zM515 398h2v1h-2zM224 399h1v1h-1zM451 399h4v1h-4zM513 399h2v1h-2zM222 400h2v1h-2zM455 400h4v1h-4zM511 400h2v1h-2zM220 401h2v1h-2zM459 401h5v1h-5zM508 401h3v1h-3zM218 402h2v1h-2zM464 402h5v1h-5zM504 402h4v1h-4zM216 403h2v1h-2zM469 403h6v1h-6zM500 403h4v1h-4zM214 404h2v1h-2zM475 404h10v1h-10zM496 404h4v1h-4zM211 405h3v1h-3zM485 405h11v1h-11zM209 406h2v1h-2zM207 407h2v1h-2zM204 408h3v1h-3zM200 409h4v1h-4zM196 410h4v1h-4zM192 411h4v1h-4zM187 412h5v1h-5zM182 413h5v1h-5zM176 414h6v1h-6zM171 415h5v1h-5zM166 416h5v1h-5zM160 417h6v1h-6zM155 418h5v1h-5zM150 419h5v1h-5zM144 420h6v1h-6zM138 421h6v1h-6zM130 422h8v1h-8zM123 423h7v1h-7zM118 424h5v1h-5zM112 425h6v1h-6zM108 426h4v1h-4zM106 427h2v1h-2zM103 428h3v1h-3zM100 429h3v1h-3zM98 430h2v1h-2zM95 431h3v1h-3zM93 432h2v1h-2zM92 433h1v1h-1zM91 434h1v1h-1zM90 435h1v1h-1zM89 436h1v1h-1zM88 437h1v1h-1zM87 438h1v1h-1zM86 439h1v1h-1zM85 440h1v1h-1zM84 441h1v1h-1zM83 442h1v1h-1zM82 443h1v1h-1zM81 444h1v1h-1zM80 445h1v1h-1zM79 446h1v1h-1zM78 447h1v1h-1zM77 448h1v1h-1zM76 449h1v1h-1zM75 450h1v1h-1zM74 451h1v1h-1zM74 452h1v1h-1zM73 453h1v1h-1zM72 454h1v1h-1zM71 455h1v1h-1zM70 456h1v1h-1zM69 457h1v1h-1zM69 458h1v1h-1zM68 459h1v1h-1zM67 460h1v1h-1zM66 461h1v1h-1zM65 462h1v1h-1zM64 463h1v1h-1zM64 464h1v1h-1zM63 465h1v1h-1zM62 466h1v1h-1zM61 467h1v1h-1zM60 468h1v1h-1zM59 469h1v1h-1zM58 470h1v1h-1zM57 471h1v1h-1zM56 472h1v1h-1zM55 473h1v1h-1zM54 474h1v1h-1zM53 475h1v1h-1zM53 476h1v1h-1zM52 477h1v1h-1zM51 478h1v1h-1zM50 479h1v1h-1zM49 480h1v1h-1zM48 481h1v1h-1zM47 482h1v1h-1zM46 483h1v1h-1zM45 484h1v1h-1zM43 485h2v1h-2zM41 486h2v1h-2zM39 487h2v1h-2zM38 488h1v1h-1zM36 489h2v1h-2zM34 490h2v1h-2zM32 491h2v1h-2zM30 492h2v1h-2zM29 493h1v1h-1zM27 494h2v1h-2zM26 495h1v1h-1zM24 496h2v1h-2zM22 497h2v1h-2zM21 498h1v1h-1zM19 499h2v1h-2zM18 500h1v1h-1zM16 501h2v1h-2zM14 502h2v1h-2zM13 503h1v1h-1z" fill="#f00"/>
<path d="M1213 153h1v1h-1zM1214 154h1v1h-1zM1214 155h1v1h-1zM1214 156h1v1h-1zM1215 157h1v1h-1zM1216 158h1v1h-1zM1216 159h1v1h-1zM1216 160h1v1h-1zM1217 161h1v1h-1zM1218 162h1v1h-1zM1218 163h1v1h-1zM1218 164h1v1h-1zM1219 165h1v1h-1zM1220 166h1v1h-1zM1220 167h1v1h-1zM1220 168h1v1h-1zM1221 169h1v1h-1zM1222 170h1v1h-1zM1222 171h1v1h-1zM1222 172h1v1h-1zM1223 173h1v1h-1zM1224 174h1v1h-1zM1224 175h1v1h-1zM1224 176h1v1h-1zM1225 177h1v1h-1zM1226 178h1v1h-1zM1226 179h1v1h-1zM1226 180h1v1h-1zM1227 181h1v1h-1zM1228 182h1v1h-1zM1228 183h1v1h-1zM1228 184h1v1h-1zM1229 185h1v1h-1zM1230 186h1v1h-1zM1230 187h1v1h-1zM1230 188h1v1h-1zM1231 189h1v1h-1zM1232 190h1v1h-1zM1232 191h1v1h-1zM1232 192h1v1h-1zM1233 193h1v1h-1zM1234 194h1v1h-1zM1234 195h1v1h-1zM1234 196h1v1h-1zM1235 197h1v1h-1zM1236 198h1v1h-1zM1236 199h1v1h-1zM1236 200h1v1h-1zM1237 201h1v1h-1zM1238 202h1v1h-1zM1238 203h1v1h-1zM1238 204h1v1h-1zM1239 205h1v1h-1zM1240 206h1v1h-1zM1240 207h1v1h-1zM1240 208h1v1h-1zM1241 209h1v1h-1zM1242 210h1v1h-1zM1242 211h1v1h-1zM1242 212h1v1h-1zM1243 213h1v1h-1zM1244 214h1v1h-1zM1244 215h1v1h-1zM1244 216h1v1h-1zM1245 217h1v1h-1zM1246 218h1v1h-1zM1246 219h1v1h-1zM1246 220h1v1h-1zM1247 221h1v1h-1zM1248 222h1v1h-1zM1248 223h1v1h-1zM1248 224h1v1h-1zM1249 225h1v1h-1zM1250 226h1v1h-1zM1250 227h1v1h-1zM1250 228h1v1h-1zM1251 229h1v1h-1zM1252 230h1v1h-1zM1252 231h1v1h-1zM1252 232h1v1h-1zM1253 233h1v1h-1zM1254 234h1v1h-1zM1254 235h1v1h-1zM1254 236h1v1h-1zM1255 237h1v1h-1zM1256 238h1v1h-1zM1256 239h1v1h-1zM1256 240h1v1h-1zM1257 241h1v1h-1zM1258 242h1v1h-1zM1258 243h1v1h-1zM1258 244h1v1h-1zM1259 245h1v1h-1zM1260 246h1v1h-1zM1260 247h1v1h-1zM1260 248h1v1h-1zM1261 249h1v1h-1zM1262 250h1v1h-1zM1262 251h1v1h-1zM1262 252h1v1h-1zM1263 253h1v1h-1zM1264 254h1v1h-1zM1264 255h1v1h-1zM1264 256h1v1h-1zM1265 257h1v1h-1zM1266 258h1v1h-1zM1266 259h1v1h-1zM1266 260h1v1h-1zM1267 261h1v1h-1zM1268 262h1v1h-1zM1268 263h1v1h-1zM1268 264h1v1h-1zM1269 265h1v1h-1zM1270 266h1v1h-1zM1270 267h1v1h-1zM1270 268h1v1h-1zM1271 269h1v1h-1zM1272 270h1v1h-1zM1272 271h1v1h-1zM1272 272h1v1h-1zM1273 273h1v1h-1zM1274 274h1v1h-1zM1274 275h1v1h-1zM1274 276h1v1h-1zM1275 277h1v1h-1zM1276 278h1v1h-1zM1276 279h1v1h-1zM1276 280h1v1h-1zM1277 281h1v1h-1zM1278 282h1v1h-1zM1278 283h1v1h-1zM1278 284h1v1h-1zM1279 285h1v1h-1zM1280 286h1v1h-1zM1280 287h1v1h-1zM1280 288h1v1h-1zM1281 289h1v1h-1zM1282 290h1v1h-1zM1282 291h1v1h-1zM1282 292h1v1h-1zM1283 293h1v1h-1zM1284 294h1v1h-1zM1284 295h1v1h-1zM1284 296h1v1h-1zM1285 297h1v1h-1zM1286 298h1v1h-1zM1286 299h1v1h-1zM1286 300h1v1h-1zM1287 301h1v1h-1zM1288 302h1v1h-1zM1288 303h1v1h-1zM1288 304h1v1h-1zM1289 305h1v1h-1zM1290 306h1v1h-1zM1290 307h1v1h-1zM1290 308h1v1h-1zM1291 309h1v1h-1zM1292 310h1v1h-1zM1292 311h1v1h-1zM1292 312h1v1h-1zM1293 313h1v1h-1zM1294 314h1v1h-1zM1294 315h1v1h-1zM1294 316h1v1h-1zM1295 317h1v1h-1zM1296 318h1v1h-1zM1296 319h1v1h-1zM1296 320h1v1h-1zM1297 321h1v1h-1zM1298 322h1v1h-1zM1298 323h1v1h-1zM1298 324h1v1h-1zM1299 325h1v1h-1zM1300 326h1v1h-1zM1300 327h1v1h-1zM1300 328h1v1h-1zM1301 329h1v1h-1zM1302 330h1v1h-1zM1302 331h1v1h-1zM1302 332h1v1h-1zM1303 333h1v1h-1zM1304 334h1v1h-1zM1304 335h1v1h-1zM1304 336h1v1h-1zM1305 337h1v1h-1zM1306 338h1v1h-1zM1306 339h1v1h-1zM1306 340h1v1h-1zM1307 341h1v1h-1zM1308 342h1v1h-1zM1308 343h1v1h-1zM1308 344h1v1h-1zM1309 345h1v1h-1zM1310 346h1v1h-1zM1310 347h1v1h-1zM1310 348h1v1h-1zM1311 349h1v1h-1zM1312 350h1v1h-1zM1312 351h1v1h-1zM1312 352h1v1h-1zM1313 353h1v1h-1zM1314 354h1v1h-1zM1314 355h1v1h-1zM1314 356h1v1h-1zM1315 357h1v1h-1zM1316 358h1v1h-1zM1316 359h1v1h-1zM1316 360h1v1h-1zM1317 361h1v1h-1zM1318 362h1v1h-1zM1318 363h1v1h-1zM1318 364h1v1h-1zM1319 365h1v1h-1zM1320 366h1v1h-1zM1320 367h1v1h-1zM1320 368h1v1h-1zM1321 369h1v1h-1zM1322 370h1v1h-1zM1322 371h1v1h-1zM1322 372h1v1h-1zM1323 373h1v1h-1zM1324 374h1v1h-1zM1324 375h1v1h-1zM1324 376h1v1h-1zM1325 377h1v1h-1zM1326 378h1v1h-1zM1326 379h1v1h-1zM1326 380h1v1h-1zM1327 381h1v1h-1zM1328 382h1v1h-1zM1328 383h1v1h-1zM1328 384h1v1h-1zM1329 385h1v1h-1zM1330 386h1v1h-1zM1330 387h1v1h-1zM1330 388h1v1h-1zM1331 389h1v1h-1zM1332 390h1v1h-1zM1332 391h1v1h-1z" fill="#f00"/>
<line x1="13.5" y1="439" x2="13.5" y2="521" stroke="#0f0"/>
<rect x="8.5" y="444.5" width="10" height="57" fill="#000" stroke="#0f0"/>
<line x1="29.5" y1="428" x2="29.5" y2="457" stroke="#0f0"/>
<rect x="24.5" y="444.5" width="10" height="7" fill="#fff" stroke="#0f0"/>
<line x1="45.5" y1="414" x2="45.5" y2="470" stroke="#0f0"/>
<rect x="40.5" y="417.5" width="10" height="35" fill="#000" stroke="#0f0"/>
<line x1="61.5" y1="362" x2="61.5" y2="423" stroke="#0f0"/>
<rect x="56.5" y="367.5" width="10" height="48" fill="#000" stroke="#0f0"/>
<line x1="77.5" y1="341" x2="77.5" y2="393" stroke="#0f0"/>
<rect x="72.5" y="367.5" width="10" height="10" fill="#fff" stroke="#0f0"/>
<line x1="93.5" y1="339" x2="93.5" y2="387" stroke="#0f0"/>
<rect x="88.5" y="375.5" width="10" height="2" fill="#000" stroke="#0f0"/>
<line x1="109.5" y1="371" x2="109.5" y2="414" stroke="#0f0"/>
<rect x="104.5" y="372.5" width="10" height="18" fill="#fff" stroke="#0f0"/>
<line x1="125.5" y1="384" x2="125.5" y2="438" stroke="#0f0"/>
<rect x="120.5" y="390.5" width="10" height="29" fill="#fff" stroke="#0f0"/>
<line x1="141.5" y1="392" x2="141.5" y2="437" stroke="#0f0"/>
<rect x="136.5" y="401.5" width="10" height="17" fill="#000" stroke="#0f0"/>
<line x1="157.5" y1="387" x2="157.5" y2="422" stroke="#0f0"/>
<line x1="152" y1="401.5" x2="163" y2="401.5" stroke="#0f0"/>
<line x1="173.5" y1="378" x2="173.5" y2="419" stroke="#0f0"/>
<rect x="168.5" y="401.5" width="10" height="14" fill="#fff" stroke="#0f0"/>
<line x1="189.5" y1="384" x2="189.5" y2="420" stroke="#0f0"/>
<rect x="184.5" y="402.5" width="10" height="9" fill="#000" stroke="#0f0"/>
<line x1="205.5" y1="379" x2="205.5" y2="416" stroke="#0f0"/>
<rect x="200.5" y="381.5" width="10" height="21" fill="#000" stroke="#0f0"/>
<line x1="221.5" y1="346" x2="221.5" y2="399" stroke="#0f0"/>
<rect x="216.5" y="350.5" width="10" height="31" fill="#000" stroke="#0f0"/>
<line x1="237.5" y1="306" x2="237.5" y2="363" stroke="#0f0"/>
<rect x="232.5" y="310.5" width="10" height="37" fill="#000" stroke="#0f0"/>
<line x1="253.5" y1="277" x2="253.5" y2="322" stroke="#0f0"/>
<rect x="248.5" y="285.5" width="10" height="24" fill="#000" stroke="#0f0"/>
<line x1="269.5" y1="284" x2="269.5" y2="341" stroke="#0f0"/>
<rect x="264.5" y="286.5" width="10" height="44" fill="#fff" stroke="#0f0"/>
<line x1="285.5" y1="309" x2="285.5" y2="357" stroke="#0f0"/>
<rect x="280.5" y="314.5" width="10" height="16" fill="#000" stroke="#0f0"/>
<line x1="301.5" y1="292" x2="301.5" y2="346" stroke="#0f0"/>
<rect x="296.5" y="314.5" width="10" height="22" fill="#fff" stroke="#0f0"/>
<line x1="317.5" y1="322" x2="317.5" y2="353" stroke="#0f0"/>
<rect x="312.5" y="336.5" width="10" height="8" fill="#fff" stroke="#0f0"/>
<line x1="333.5" y1="334" x2="333.5" y2="393" stroke="#0f0"/>
<rect x="328.5" y="344.5" width="10" height="47" fill="#fff" stroke="#0f0"/>
<line x1="349.5" y1="388" x2="349.5" y2="419" stroke="#0f0"/>
<rect x="344.5" y="391.5" width="10" height="17" fill="#fff" stroke="#0f0"/>
<line x1="365.5" y1="395" x2="365.5" y2="429" stroke="#0f0"/>
<rect x="360.5" y="406.5" width="10" height="2" fill="#000" stroke="#0f0"/>
<line x1="381.5" y1="376" x2="381.5" y2="408" stroke="#0f0"/>
<rect x="376.5" y="388.5" width="10" height="18" fill="#000" stroke="#0f0"/>
<line x1="397.5" y1="367" x2="397.5" y2="420" stroke="#0f0"/>
<rect x="392.5" y="388.5" width="10" height="27" fill="#fff" stroke="#0f0"/>
<line x1="413.5" y1="400" x2="413.5" y2="428" stroke="#0f0"/>
<rect x="408.5" y="415.5" width="10" height="3" fill="#fff" stroke="#0f0"/>
<line x1="429.5" y1="410" x2="429.5" y2="448" stroke="#0f0"/>
<rect x="424.5" y="418.5" width="10" height="16" fill="#fff" stroke="#0f0"/>
<line x1="445.5" y1="412" x2="445.5" y2="447" stroke="#0f0"/>
<rect x="440.5" y="430.5" width="10" height="5" fill="#000" stroke="#0f0"/>
<line x1="461.5" y1="390" x2="461.5" y2="434" stroke="#0f0"/>
<rect x="456.5" y="404.5" width="10" height="26" fill="#000" stroke="#0f0"/>
<line x1="477.5" y1="403" x2="477.5" y2="432" stroke="#0f0"/>
<rect x="472.5" y="404.5" width="10" height="19" fill="#fff" stroke="#0f0"/>
<line x1="493.5" y1="399" x2="493.5" y2="430" stroke="#0f0"/>
<rect x="488.5" y="406.5" width="10" height="17" fill="#000" stroke="#0f0"/>
<line x1="509.5" y1="363" x2="509.5" y2="415" stroke="#0f0"/>
<rect x="504.5" y="364.5" width="10" height="43" fill="#000" stroke="#0f0"/>
<line x1="525.5" y1="335" x2="525.5" y2="371" stroke="#0f0"/>
<rect x="520.5" y="348.5" width="10" height="16" fill="#000" stroke="#0f0"/>
<line x1="541.5" y1="335" x2="541.5" y2="378" stroke="#0f0"/>
<rect x="536.5" y="348.5" width="10" height="2" fill="#fff" stroke="#0f0"/>
<line x1="557.5" y1="344" x2="557.5" y2="379" stroke="#0f0"/>
<rect x="552.5" y="351.5" width="10" height="1" fill="#000" stroke="#0f0"/>
<line x1="573.5" y1="338" x2="573.5" y2="360" stroke="#0f0"/>
<rect x="568.5" y="349.5" width="10" height="3" fill="#000" stroke="#0f0"/>
<line x1="589.5" y1="344" x2="589.5" y2="365" stroke="#0f0"/>
<rect x="584.5" y="349.5" width="10" height="11" fill="#fff" stroke="#0f0"/>
<line x1="605.5" y1="351" x2="605.5" y2="377" stroke="#0f0"/>
<rect x="600.5" y="353.5" width="10" height="7" fill="#000" stroke="#0f0"/>
<line x1="621.5" y1="310" x2="621.5" y2="361" stroke="#0f0"/>
<rect x="616.5" y="313.5" width="10" height="40" fill="#000" stroke="#0f0"/>
<line x1="637.5" y1="302" x2="637.5" y2="330" stroke="#0f0"/>
<rect x="632.5" y="313.5" width="10" height="3" fill="#fff" stroke="#0f0"/>
<line x1="653.5" y1="307" x2="653.5" y2="345" stroke="#0f0"/>
<rect x="648.5" y="319.5" width="10" height="11" fill="#fff" stroke="#0f0"/>
<line x1="669.5" y1="311" x2="669.5" y2="341" stroke="#0f0"/>
<rect x="664.5" y="314.5" width="10" height="16" fill="#000" stroke="#0f0"/>
<line x1="685.5" y1="299" x2="685.5" y2="328" stroke="#0f0"/>
<rect x="680.5" y="303.5" width="10" height="11" fill="#000" stroke="#0f0"/>
<line x1="701.5" y1="275" x2="701.5" y2="307" stroke="#0f0"/>
<rect x="696.5" y="279.5" width="10" height="22" fill="#000" stroke="#0f0"/>
<line x1="717.5" y1="277" x2="717.5" y2="300" stroke="#0f0"/>
<rect x="712.5" y="279.5" width="10" height="16" fill="#fff" stroke="#0f0"/>
<line x1="733.5" y1="287" x2="733.5" y2="312" stroke="#0f0"/>
<rect x="728.5" y="287.5" width="10" height="8" fill="#000" stroke="#0f0"/>
<line x1="749.5" y1="261" x2="749.5" y2="290" stroke="#0f0"/>
<rect x="744.5" y="276.5" width="10" height="12" fill="#000" stroke="#0f0"/>
<line x1="765.5" y1="263" x2="765.5" y2="304" stroke="#0f0"/>
<rect x="760.5" y="276.5" width="10" height="4" fill="#fff" stroke="#0f0"/>
<line x1="781.5" y1="226" x2="781.5" y2="288" stroke="#0f0"/>
<rect x="776.5" y="226.5" width="10" height="54" fill="#000" stroke="#0f0"/>
<line x1="797.5" y1="207" x2="797.5" y2="249" stroke="#0f0"/>
<rect x="792.5" y="209.5" width="10" height="17" fill="#000" stroke="#0f0"/>
<line x1="813.5" y1="168" x2="813.5" y2="216" stroke="#0f0"/>
<rect x="808.5" y="196.5" width="10" height="13" fill="#000" stroke="#0f0"/>
<line x1="829.5" y1="186" x2="829.5" y2="224" stroke="#0f0"/>
<rect x="824.5" y="196.5" width="10" height="4" fill="#fff" stroke="#0f0"/>
<line x1="845.5" y1="173" x2="845.5" y2="219" stroke="#0f0"/>
<rect x="840.5" y="177.5" width="10" height="22" fill="#000" stroke="#0f0"/>
<line x1="861.5" y1="145" x2="861.5" y2="213" stroke="#0f0"/>
<rect x="856.5" y="150.5" width="10" height="27" fill="#000" stroke="#0f0"/>
<line x1="877.5" y1="90" x2="877.5" y2="154" stroke="#0f0"/>
<rect x="872.5" y="99.5" width="10" height="51" fill="#000" stroke="#0f0"/>
<line x1="893.5" y1="80" x2="893.5" y2="124" stroke="#0f0"/>
<rect x="888.5" y="99.5" width="10" height="14" fill="#fff" stroke="#0f0"/>
<line x1="909.5" y1="97" x2="909.5" y2="142" stroke="#0f0"/>
<rect x="904.5" y="113.5" width="10" height="6" fill="#fff" stroke="#0f0"/>
<line x1="925.5" y1="95" x2="925.5" y2="141" stroke="#0f0"/>
<rect x="920.5" y="102.5" width="10" height="17" fill="#000" stroke="#0f0"/>
<line x1="941.5" y1="78" x2="941.5" y2="123" stroke="#0f0"/>
<rect x="936.5" y="102.5" width="10" height="13" fill="#fff" stroke="#0f0"/>
<line x1="957.5" y1="113" x2="957.5" y2="202" stroke="#0f0"/>
<rect x="952.5" y="115.5" width="10" height="76" fill="#fff" stroke="#0f0"/>
<line x1="973.5" y1="177" x2="973.5" y2="260" stroke="#0f0"/>
<rect x="968.5" y="191.5" width="10" height="50" fill="#fff" stroke="#0f0"/>
<line x1="989.5" y1="236" x2="989.5" y2="390" stroke="#0f0"/>
<rect x="984.5" y="241.5" width="10" height="115" fill="#fff" stroke="#0f0"/>
<line x1="1005.5" y1="323" x2="1005.5" y2="385" stroke="#0f0"/>
<rect x="1000.5" y="355.5" width="10" height="2" fill="#fff" stroke="#0f0"/>
<line x1="1021.5" y1="189" x2="1021.5" y2="372" stroke="#0f0"/>
<rect x="1016.5" y="253.5" width="10" height="104" fill="#000" stroke="#0f0"/>
<line x1="1037.5" y1="250" x2="1037.5" y2="353" stroke="#0f0"/>
<rect x="1032.5" y="263.5" width="10" height="86" fill="#fff" stroke="#0f0"/>
<line x1="1053.5" y1="326" x2="1053.5" y2="375" stroke="#0f0"/>
<rect x="1048.5" y="352.5" width="10" height="9" fill="#fff" stroke="#0f0"/>
<line x1="1069.5" y1="272" x2="1069.5" y2="379" stroke="#0f0"/>
<rect x="1064.5" y="312.5" width="10" height="53" fill="#000" stroke="#0f0"/>
<line x1="1085.5" y1="284" x2="1085.5" y2="345" stroke="#0f0"/>
<rect x="1080.5" y="312.5" width="10" height="2" fill="#fff" stroke="#0f0"/>
<line x1="1101.5" y1="235" x2="1101.5" y2="316" stroke="#0f0"/>
<rect x="1096.5" y="237.5" width="10" height="77" fill="#000" stroke="#0f0"/>
<line x1="1117.5" y1="221" x2="1117.5" y2="272" stroke="#0f0"/>
<rect x="1112.5" y="237.5" width="10" height="9" fill="#fff" stroke="#0f0"/>
<line x1="1133.5" y1="224" x2="1133.5" y2="264" stroke="#0f0"/>
<rect x="1128.5" y="228.5" width="10" height="18" fill="#000" stroke="#0f0"/>
<line x1="1149.5" y1="212" x2="1149.5" y2="246" stroke="#0f0"/>
<rect x="1144.5" y="221.5" width="10" height="6" fill="#000" stroke="#0f0"/>
<line x1="1165.5" y1="178" x2="1165.5" y2="235" stroke="#0f0"/>
<rect x="1160.5" y="196.5" width="10" height="25" fill="#000" stroke="#0f0"/>
<line x1="1181.5" y1="160" x2="1181.5" y2="210" stroke="#0f0"/>
<rect x="1176.5" y="189.5" width="10" height="7" fill="#000" stroke="#0f0"/>
<line x1="1197.5" y1="153" x2="1197.5" y2="198" stroke="#0f0"/>
<rect x="1192.5" y="165.5" width="10" height="24" fill="#000" stroke="#0f0"/>
<line x1="1213.5" y1="153" x2="1213.5" y2="232" stroke="#0f0"/>
<rect x="1208.5" y="165.5" width="10" height="56" fill="#fff" stroke="#0f0"/>
<line x1="1229.5" y1="201" x2="1229.5" y2="262" stroke="#0f0"/>
<rect x="1224.5" y="224.5" width="10" height="37" fill="#fff" stroke="#0f0"/>
<line x1="1245.5" y1="247" x2="1245.5" y2="297" stroke="#0f0"/>
<rect x="1240.5" y="260.5" width="10" height="20" fill="#fff" stroke="#0f0"/>
<line x1="1261.5" y1="264" x2="1261.5" y2="312" stroke="#0f0"/>
<rect x="1256.5" y="281.5" width="10" height="9" fill="#fff" stroke="#0f0"/>
<line x1="1277.5" y1="275" x2="1277.5" y2="325" stroke="#0f0"/>
<rect x="1272.5" y="290.5" width="10" height="18" fill="#fff" stroke="#0f0"/>
<line x1="1293.5" y1="303" x2="1293.5" y2="387" stroke="#0f0"/>
<rect x="1288.5" y="303.5" width="10" height="83" fill="#fff" stroke="#0f0"/>
</g>
<g shape-rendering="geometricPrecision" clip-path="url(#cm)">
<path d="M93.5,324.2 L87.4,333.59999999999997 L93.5,330.59999999999997 Z" fill="#909090" stroke="#858585" stroke-width=".4"/><path d="M93.5,324.2 L99.6,333.59999999999997 L93.5,330.59999999999997" fill="none" stroke="#74767d" stroke-width=".8"/>
<path d="M173.5,363.2 L167.4,372.59999999999997 L173.5,369.59999999999997 Z" fill="#909090" stroke="#858585" stroke-width=".4"/><path d="M173.5,363.2 L179.6,372.59999999999997 L173.5,369.59999999999997" fill="none" stroke="#74767d" stroke-width=".8"/>
<path d="M253.5,262.2 L247.4,271.59999999999997 L253.5,268.59999999999997 Z" fill="#909090" stroke="#858585" stroke-width=".4"/><path d="M253.5,262.2 L259.6,271.59999999999997 L253.5,268.59999999999997" fill="none" stroke="#74767d" stroke-width=".8"/>
<path d="M397.5,352.2 L391.4,361.59999999999997 L397.5,358.59999999999997 Z" fill="#909090" stroke="#858585" stroke-width=".4"/><path d="M397.5,352.2 L403.6,361.59999999999997 L397.5,358.59999999999997" fill="none" stroke="#74767d" stroke-width=".8"/>
<path d="M461.5,375.2 L455.4,384.59999999999997 L461.5,381.59999999999997 Z" fill="#909090" stroke="#858585" stroke-width=".4"/><path d="M461.5,375.2 L467.6,384.59999999999997 L461.5,381.59999999999997" fill="none" stroke="#74767d" stroke-width=".8"/>
<path d="M541.5,320.2 L535.4,329.59999999999997 L541.5,326.59999999999997 Z" fill="#909090" stroke="#858585" stroke-width=".4"/><path d="M541.5,320.2 L547.6,329.59999999999997 L541.5,326.59999999999997" fill="none" stroke="#74767d" stroke-width=".8"/>
<path d="M637.5,287.2 L631.4,296.59999999999997 L637.5,293.59999999999997 Z" fill="#909090" stroke="#858585" stroke-width=".4"/><path d="M637.5,287.2 L643.6,296.59999999999997 L637.5,293.59999999999997" fill="none" stroke="#74767d" stroke-width=".8"/>
<path d="M701.5,260.2 L695.4,269.59999999999997 L701.5,266.59999999999997 Z" fill="#909090" stroke="#858585" stroke-width=".4"/><path d="M701.5,260.2 L707.6,269.59999999999997 L701.5,266.59999999999997" fill="none" stroke="#74767d" stroke-width=".8"/>
<path d="M813.5,153.2 L807.4,162.6 L813.5,159.6 Z" fill="#909090" stroke="#858585" stroke-width=".4"/><path d="M813.5,153.2 L819.6,162.6 L813.5,159.6" fill="none" stroke="#74767d" stroke-width=".8"/>
<path d="M893.5,65.2 L887.4,74.60000000000001 L893.5,71.60000000000001 Z" fill="#909090" stroke="#858585" stroke-width=".4"/><path d="M893.5,65.2 L899.6,74.60000000000001 L893.5,71.60000000000001" fill="none" stroke="#74767d" stroke-width=".8"/>
<path d="M941.5,63.2 L935.4,72.60000000000001 L941.5,69.60000000000001 Z" fill="#909090" stroke="#858585" stroke-width=".4"/><path d="M941.5,63.2 L947.6,72.60000000000001 L941.5,69.60000000000001" fill="none" stroke="#74767d" stroke-width=".8"/>
<path d="M1021.5,174.2 L1015.4,183.6 L1021.5,180.6 Z" fill="#909090" stroke="#858585" stroke-width=".4"/><path d="M1021.5,174.2 L1027.6,183.6 L1021.5,180.6" fill="none" stroke="#74767d" stroke-width=".8"/>
<path d="M1197.5,138.2 L1191.4,147.6 L1197.5,144.6 Z" fill="#909090" stroke="#858585" stroke-width=".4"/><path d="M1197.5,138.2 L1203.6,147.6 L1197.5,144.6" fill="none" stroke="#74767d" stroke-width=".8"/>
<path d="M13.5,533.8 L19.6,524.4 L13.5,527.4 Z" fill="#909090" stroke="#858585" stroke-width=".4"/><path d="M13.5,533.8 L7.4,524.4 L13.5,527.4" fill="none" stroke="#74767d" stroke-width=".8"/>
<path d="M125.5,450.8 L131.6,441.40000000000003 L125.5,444.40000000000003 Z" fill="#909090" stroke="#858585" stroke-width=".4"/><path d="M125.5,450.8 L119.4,441.40000000000003 L125.5,444.40000000000003" fill="none" stroke="#74767d" stroke-width=".8"/>
<path d="M285.5,369.8 L291.6,360.40000000000003 L285.5,363.40000000000003 Z" fill="#909090" stroke="#858585" stroke-width=".4"/><path d="M285.5,369.8 L279.4,360.40000000000003 L285.5,363.40000000000003" fill="none" stroke="#74767d" stroke-width=".8"/>
<path d="M365.5,441.8 L371.6,432.40000000000003 L365.5,435.40000000000003 Z" fill="#909090" stroke="#858585" stroke-width=".4"/><path d="M365.5,441.8 L359.4,432.40000000000003 L365.5,435.40000000000003" fill="none" stroke="#74767d" stroke-width=".8"/>
<path d="M429.5,460.8 L435.6,451.40000000000003 L429.5,454.40000000000003 Z" fill="#909090" stroke="#858585" stroke-width=".4"/><path d="M429.5,460.8 L423.4,451.40000000000003 L429.5,454.40000000000003" fill="none" stroke="#74767d" stroke-width=".8"/>
<path d="M557.5,391.8 L563.6,382.40000000000003 L557.5,385.40000000000003 Z" fill="#909090" stroke="#858585" stroke-width=".4"/><path d="M557.5,391.8 L551.4,382.40000000000003 L557.5,385.40000000000003" fill="none" stroke="#74767d" stroke-width=".8"/>
<path d="M605.5,389.8 L611.6,380.40000000000003 L605.5,383.40000000000003 Z" fill="#909090" stroke="#858585" stroke-width=".4"/><path d="M605.5,389.8 L599.4,380.40000000000003 L605.5,383.40000000000003" fill="none" stroke="#74767d" stroke-width=".8"/>
<path d="M733.5,324.8 L739.6,315.40000000000003 L733.5,318.40000000000003 Z" fill="#909090" stroke="#858585" stroke-width=".4"/><path d="M733.5,324.8 L727.4,315.40000000000003 L733.5,318.40000000000003" fill="none" stroke="#74767d" stroke-width=".8"/>
<path d="M989.5,402.8 L995.6,393.40000000000003 L989.5,396.40000000000003 Z" fill="#909090" stroke="#858585" stroke-width=".4"/><path d="M989.5,402.8 L983.4,393.40000000000003 L989.5,396.40000000000003" fill="none" stroke="#74767d" stroke-width=".8"/>
<path d="M1069.5,391.8 L1075.6,382.40000000000003 L1069.5,385.40000000000003 Z" fill="#909090" stroke="#858585" stroke-width=".4"/><path d="M1069.5,391.8 L1063.4,382.40000000000003 L1069.5,385.40000000000003" fill="none" stroke="#74767d" stroke-width=".8"/>
</g>
<line x1="15" y1="583.5" x2="1332" y2="583.5" stroke="#d0d0d0" stroke-dasharray="3 3"/>
<line x1="15" y1="615.5" x2="1332" y2="615.5" stroke="#d0d0d0" stroke-dasharray="3 3"/>
<line x1="15" y1="647.5" x2="1332" y2="647.5" stroke="#d0d0d0" stroke-dasharray="3 3"/>
<line x1="15" y1="694.5" x2="1332" y2="694.5" stroke="#e0e0e0" stroke-dasharray="3 3"/>
<line x1="13" y1="640.5" x2="1332" y2="640.5" stroke="#f00"/>
<path d="M876 561h3v1h-3zM874 562h2v1h-2zM879 562h2v1h-2zM872 563h2v1h-2zM881 563h2v1h-2zM870 564h2v1h-2zM883 564h2v1h-2zM867 565h3v1h-3zM885 565h3v1h-3zM865 566h2v1h-2zM888 566h2v1h-2zM863 567h2v1h-2zM890 567h2v1h-2zM860 568h3v1h-3zM892 568h4v1h-4zM856 569h4v1h-4zM896 569h5v1h-5zM922 569h5v1h-5zM852 570h4v1h-4zM901 570h6v1h-6zM914 570h8v1h-8zM927 570h2v1h-2zM848 571h4v1h-4zM907 571h7v1h-7zM929 571h3v1h-3zM844 572h4v1h-4zM932 572h3v1h-3zM251 573h3v1h-3zM810 573h6v1h-6zM840 573h4v1h-4zM935 573h2v1h-2zM246 574h5v1h-5zM254 574h1v1h-1zM802 574h8v1h-8zM816 574h5v1h-5zM836 574h4v1h-4zM937 574h3v1h-3zM60 575h4v1h-4zM240 575h6v1h-6zM255 575h1v1h-1zM796 575h6v1h-6zM821 575h6v1h-6zM832 575h4v1h-4zM940 575h2v1h-2zM58 576h2v1h-2zM64 576h5v1h-5zM236 576h4v1h-4zM256 576h1v1h-1zM792 576h4v1h-4zM827 576h5v1h-5zM942 576h1v1h-1zM56 577h2v1h-2zM69 577h6v1h-6zM234 577h2v1h-2zM257 577h1v1h-1zM788 577h4v1h-4zM942 577h1v1h-1zM54 578h2v1h-2zM75 578h20v1h-20zM232 578h2v1h-2zM258 578h1v1h-1zM784 578h4v1h-4zM943 578h1v1h-1zM51 579h3v1h-3zM95 579h3v1h-3zM230 579h2v1h-2zM259 579h1v1h-1zM781 579h3v1h-3zM943 579h1v1h-1zM49 580h2v1h-2zM98 580h3v1h-3zM227 580h3v1h-3zM260 580h1v1h-1zM780 580h1v1h-1zM944 580h1v1h-1zM47 581h2v1h-2zM101 581h4v1h-4zM225 581h2v1h-2zM261 581h1v1h-1zM778 581h2v1h-2zM944 581h1v1h-1zM44 582h3v1h-3zM105 582h3v1h-3zM223 582h2v1h-2zM261 582h1v1h-1zM777 582h1v1h-1zM945 582h1v1h-1zM41 583h3v1h-3zM108 583h2v1h-2zM220 583h3v1h-3zM262 583h1v1h-1zM776 583h1v1h-1zM945 583h1v1h-1zM38 584h3v1h-3zM110 584h2v1h-2zM218 584h2v1h-2zM263 584h1v1h-1zM774 584h2v1h-2zM946 584h1v1h-1zM13 585h4v1h-4zM34 585h4v1h-4zM112 585h1v1h-1zM215 585h3v1h-3zM264 585h1v1h-1zM773 585h1v1h-1zM947 585h1v1h-1zM17 586h8v1h-8zM31 586h3v1h-3zM113 586h2v1h-2zM212 586h3v1h-3zM265 586h1v1h-1zM700 586h3v1h-3zM772 586h1v1h-1zM947 586h1v1h-1zM25 587h6v1h-6zM115 587h1v1h-1zM210 587h2v1h-2zM266 587h1v1h-1zM283 587h3v1h-3zM696 587h4v1h-4zM703 587h2v1h-2zM770 587h2v1h-2zM948 587h1v1h-1zM116 588h1v1h-1zM207 588h3v1h-3zM267 588h1v1h-1zM278 588h5v1h-5zM286 588h2v1h-2zM692 588h4v1h-4zM705 588h2v1h-2zM746 588h6v1h-6zM769 588h1v1h-1zM948 588h1v1h-1zM117 589h2v1h-2zM204 589h3v1h-3zM268 589h1v1h-1zM272 589h6v1h-6zM288 589h2v1h-2zM688 589h4v1h-4zM707 589h2v1h-2zM738 589h8v1h-8zM752 589h5v1h-5zM768 589h1v1h-1zM949 589h1v1h-1zM119 590h1v1h-1zM200 590h4v1h-4zM269 590h3v1h-3zM290 590h2v1h-2zM684 590h4v1h-4zM709 590h3v1h-3zM731 590h7v1h-7zM757 590h6v1h-6zM766 590h2v1h-2zM949 590h1v1h-1zM120 591h2v1h-2zM139 591h20v1h-20zM196 591h4v1h-4zM292 591h2v1h-2zM621 591h4v1h-4zM680 591h4v1h-4zM712 591h2v1h-2zM726 591h5v1h-5zM763 591h3v1h-3zM950 591h1v1h-1zM122 592h1v1h-1zM134 592h5v1h-5zM159 592h3v1h-3zM192 592h4v1h-4zM294 592h2v1h-2zM619 592h2v1h-2zM625 592h8v1h-8zM676 592h4v1h-4zM714 592h2v1h-2zM720 592h6v1h-6zM950 592h1v1h-1zM123 593h2v1h-2zM128 593h6v1h-6zM162 593h3v1h-3zM187 593h5v1h-5zM296 593h2v1h-2zM618 593h1v1h-1zM633 593h6v1h-6zM672 593h4v1h-4zM716 593h4v1h-4zM951 593h1v1h-1zM125 594h3v1h-3zM165 594h4v1h-4zM182 594h5v1h-5zM298 594h2v1h-2zM616 594h2v1h-2zM639 594h2v1h-2zM668 594h4v1h-4zM951 594h1v1h-1zM169 595h3v1h-3zM176 595h6v1h-6zM300 595h5v1h-5zM615 595h1v1h-1zM641 595h3v1h-3zM665 595h3v1h-3zM952 595h1v1h-1zM172 596h4v1h-4zM305 596h8v1h-8zM614 596h1v1h-1zM644 596h3v1h-3zM662 596h3v1h-3zM953 596h1v1h-1zM313 597h5v1h-5zM612 597h2v1h-2zM647 597h2v1h-2zM658 597h4v1h-4zM953 597h1v1h-1zM318 598h1v1h-1zM611 598h1v1h-1zM649 598h3v1h-3zM655 598h3v1h-3zM954 598h1v1h-1zM319 599h1v1h-1zM523 599h10v1h-10zM609 599h2v1h-2zM652 599h3v1h-3zM954 599h1v1h-1zM1195 599h3v1h-3zM320 600h1v1h-1zM518 600h5v1h-5zM533 600h42v1h-42zM608 600h1v1h-1zM955 600h1v1h-1zM1190 600h5v1h-5zM1198 600h1v1h-1zM321 601h2v1h-2zM512 601h6v1h-6zM575 601h4v1h-4zM606 601h2v1h-2zM955 601h1v1h-1zM1184 601h6v1h-6zM1199 601h2v1h-2zM323 602h1v1h-1zM509 602h3v1h-3zM579 602h4v1h-4zM602 602h4v1h-4zM956 602h1v1h-1zM1178 602h6v1h-6zM1201 602h1v1h-1zM324 603h1v1h-1zM508 603h1v1h-1zM583 603h4v1h-4zM594 603h8v1h-8zM956 603h1v1h-1zM1170 603h8v1h-8zM1202 603h1v1h-1zM325 604h1v1h-1zM506 604h2v1h-2zM587 604h7v1h-7zM957 604h1v1h-1zM1164 604h6v1h-6zM1203 604h2v1h-2zM326 605h1v1h-1zM505 605h1v1h-1zM958 605h1v1h-1zM1160 605h4v1h-4zM1205 605h1v1h-1zM327 606h1v1h-1zM504 606h1v1h-1zM959 606h2v1h-2zM1156 606h4v1h-4zM1206 606h1v1h-1zM328 607h1v1h-1zM502 607h2v1h-2zM961 607h1v1h-1zM1152 607h4v1h-4zM1207 607h2v1h-2zM329 608h2v1h-2zM501 608h1v1h-1zM962 608h1v1h-1zM1142 608h10v1h-10zM1209 608h1v1h-1zM331 609h1v1h-1zM500 609h1v1h-1zM963 609h2v1h-2zM1131 609h11v1h-11zM1210 609h1v1h-1zM332 610h1v1h-1zM380 610h2v1h-2zM498 610h2v1h-2zM965 610h1v1h-1zM1101 610h4v1h-4zM1126 610h5v1h-5zM1211 610h2v1h-2zM333 611h2v1h-2zM377 611h3v1h-3zM382 611h2v1h-2zM497 611h1v1h-1zM966 611h1v1h-1zM1100 611h1v1h-1zM1105 611h8v1h-8zM1120 611h6v1h-6zM1213 611h2v1h-2zM335 612h4v1h-4zM374 612h3v1h-3zM384 612h2v1h-2zM496 612h1v1h-1zM967 612h2v1h-2zM1098 612h2v1h-2zM1113 612h7v1h-7zM1215 612h2v1h-2zM339 613h4v1h-4zM370 613h4v1h-4zM386 613h2v1h-2zM461 613h2v1h-2zM494 613h2v1h-2zM969 613h1v1h-1zM1097 613h1v1h-1zM1217 613h2v1h-2zM343 614h4v1h-4zM367 614h3v1h-3zM388 614h2v1h-2zM459 614h2v1h-2zM463 614h2v1h-2zM492 614h2v1h-2zM970 614h1v1h-1zM1096 614h1v1h-1zM1219 614h2v1h-2zM347 615h20v1h-20zM390 615h2v1h-2zM457 615h2v1h-2zM465 615h3v1h-3zM489 615h3v1h-3zM971 615h2v1h-2zM1095 615h1v1h-1zM1221 615h3v1h-3zM392 616h2v1h-2zM455 616h2v1h-2zM468 616h3v1h-3zM486 616h3v1h-3zM973 616h1v1h-1zM1021 616h1v1h-1zM1094 616h1v1h-1zM1224 616h2v1h-2zM394 617h2v1h-2zM454 617h1v1h-1zM471 617h2v1h-2zM482 617h4v1h-4zM974 617h1v1h-1zM1020 617h1v1h-1zM1022 617h1v1h-1zM1092 617h2v1h-2zM1226 617h2v1h-2zM396 618h19v1h-19zM452 618h2v1h-2zM473 618h3v1h-3zM479 618h3v1h-3zM974 618h1v1h-1zM1020 618h1v1h-1zM1023 618h1v1h-1zM1091 618h1v1h-1zM1228 618h3v1h-3zM415 619h3v1h-3zM450 619h2v1h-2zM476 619h3v1h-3zM975 619h1v1h-1zM1019 619h1v1h-1zM1024 619h1v1h-1zM1090 619h1v1h-1zM1231 619h4v1h-4zM418 620h3v1h-3zM448 620h2v1h-2zM976 620h1v1h-1zM1018 620h1v1h-1zM1025 620h2v1h-2zM1089 620h1v1h-1zM1235 620h4v1h-4zM421 621h4v1h-4zM446 621h2v1h-2zM977 621h1v1h-1zM1018 621h1v1h-1zM1027 621h1v1h-1zM1087 621h2v1h-2zM1239 621h4v1h-4zM425 622h3v1h-3zM438 622h8v1h-8zM977 622h1v1h-1zM1017 622h1v1h-1zM1028 622h1v1h-1zM1086 622h1v1h-1zM1243 622h10v1h-10zM428 623h10v1h-10zM978 623h1v1h-1zM1016 623h1v1h-1zM1029 623h1v1h-1zM1069 623h17v1h-17zM1253 623h10v1h-10zM979 624h1v1h-1zM1015 624h1v1h-1zM1030 624h1v1h-1zM1067 624h2v1h-2zM1263 624h4v1h-4zM980 625h1v1h-1zM1015 625h1v1h-1zM1031 625h1v1h-1zM1065 625h2v1h-2zM1267 625h4v1h-4zM980 626h1v1h-1zM1014 626h1v1h-1zM1032 626h1v1h-1zM1063 626h2v1h-2zM1271 626h4v1h-4zM981 627h1v1h-1zM1013 627h1v1h-1zM1033 627h2v1h-2zM1062 627h1v1h-1zM1275 627h3v1h-3zM982 628h1v1h-1zM1013 628h1v1h-1zM1035 628h1v1h-1zM1060 628h2v1h-2zM1278 628h2v1h-2zM982 629h1v1h-1zM1012 629h1v1h-1zM1036 629h1v1h-1zM1058 629h2v1h-2zM1280 629h1v1h-1zM983 630h1v1h-1zM1011 630h1v1h-1zM1037 630h4v1h-4zM1056 630h2v1h-2zM1281 630h2v1h-2zM984 631h1v1h-1zM1011 631h1v1h-1zM1041 631h8v1h-8zM1054 631h2v1h-2zM1283 631h1v1h-1zM985 632h1v1h-1zM1010 632h1v1h-1zM1049 632h5v1h-5zM1284 632h1v1h-1zM985 633h1v1h-1zM1009 633h1v1h-1zM1285 633h2v1h-2zM986 634h1v1h-1zM1008 634h1v1h-1zM1287 634h1v1h-1zM987 635h1v1h-1zM1008 635h1v1h-1zM1288 635h2v1h-2zM988 636h1v1h-1zM1007 636h1v1h-1zM1290 636h1v1h-1zM988 637h1v1h-1zM1006 637h1v1h-1zM1291 637h2v1h-2zM989 638h8v1h-8zM1006 638h1v1h-1zM1293 638h1v1h-1zM997 639h9v1h-9z" fill="#1e90ff"/>
<path d="M877 561h5v1h-5zM882 562h8v1h-8zM890 563h9v1h-9zM899 564h9v1h-9zM908 565h8v1h-8zM916 566h9v1h-9zM925 567h8v1h-8zM933 568h9v1h-9zM942 569h8v1h-8zM950 570h9v1h-9zM959 571h9v1h-9zM968 572h8v1h-8zM976 573h9v1h-9zM985 574h8v1h-8zM993 575h9v1h-9zM1002 576h9v1h-9zM1011 577h8v1h-8zM1019 578h9v1h-9zM1028 579h8v1h-8zM1036 580h9v1h-9zM1045 581h8v1h-8zM1053 582h9v1h-9zM1062 583h9v1h-9zM1071 584h8v1h-8zM1079 585h9v1h-9zM1088 586h8v1h-8zM1096 587h9v1h-9zM1105 588h9v1h-9zM1114 589h8v1h-8zM1122 590h9v1h-9zM1131 591h8v1h-8zM1139 592h9v1h-9zM1148 593h9v1h-9zM1157 594h8v1h-8zM1165 595h9v1h-9zM1174 596h8v1h-8zM1182 597h9v1h-9zM1191 598h8v1h-8zM1199 599h9v1h-9zM1208 600h9v1h-9zM1217 601h8v1h-8zM1225 602h9v1h-9zM1234 603h8v1h-8zM1242 604h9v1h-9zM1251 605h9v1h-9zM1260 606h8v1h-8zM1268 607h9v1h-9zM1277 608h8v1h-8zM1285 609h9v1h-9zM1294 610h8v1h-8zM1302 611h9v1h-9zM1311 612h9v1h-9zM1320 613h8v1h-8zM1328 614h5v1h-5z" fill="#f00"/>
<rect x="875.5" y="559.5" width="4" height="4" fill="#fff" stroke="#f00"/>
<rect x="1035.5" y="578.5" width="4" height="4" fill="#fff" stroke="#f00"/>
<rect x="1195.5" y="597.5" width="4" height="4" fill="#fff" stroke="#f00"/>
<rect x="1327.5" y="446.5" width="4" height="4" fill="#fff" stroke="#f00"/>
<path d="M12.5,533 V54.5 H1332.5 V533 M12,532.5 H1333" fill="none" stroke="#fff"/>
<path d="M12.5,696 V534.5 H1332.5 V696 M12,695.5 H1333" fill="none" stroke="#fff"/>
<line x1="1333" y1="82.5" x2="1335" y2="82.5" stroke="#fff"/>
<line x1="1333" y1="114.5" x2="1335" y2="114.5" stroke="#fff"/>
<line x1="1333" y1="146.5" x2="1335" y2="146.5" stroke="#fff"/>
<line x1="1333" y1="178.5" x2="1335" y2="178.5" stroke="#fff"/>
<line x1="1333" y1="210.5" x2="1335" y2="210.5" stroke="#fff"/>
<line x1="1333" y1="242.5" x2="1335" y2="242.5" stroke="#fff"/>
<line x1="1333" y1="274.5" x2="1335" y2="274.5" stroke="#fff"/>
<line x1="1333" y1="306.5" x2="1335" y2="306.5" stroke="#fff"/>
<line x1="1333" y1="337.5" x2="1335" y2="337.5" stroke="#fff"/>
<line x1="1333" y1="369.5" x2="1335" y2="369.5" stroke="#fff"/>
<line x1="1333" y1="401.5" x2="1335" y2="401.5" stroke="#fff"/>
<line x1="1333" y1="433.5" x2="1335" y2="433.5" stroke="#fff"/>
<line x1="1333" y1="465.5" x2="1335" y2="465.5" stroke="#fff"/>
<line x1="1333" y1="497.5" x2="1335" y2="497.5" stroke="#fff"/>
<line x1="1333" y1="530.5" x2="1335" y2="530.5" stroke="#fff"/>
<line x1="1333" y1="536.5" x2="1335" y2="536.5" stroke="#fff"/>
<line x1="13.5" y1="696" x2="13.5" y2="699" stroke="#fff"/>
<line x1="77.5" y1="696" x2="77.5" y2="699" stroke="#fff"/>
<line x1="141.5" y1="696" x2="141.5" y2="699" stroke="#fff"/>
<line x1="205.5" y1="696" x2="205.5" y2="699" stroke="#fff"/>
<line x1="269.5" y1="696" x2="269.5" y2="699" stroke="#fff"/>
<line x1="333.5" y1="696" x2="333.5" y2="699" stroke="#fff"/>
<line x1="397.5" y1="696" x2="397.5" y2="699" stroke="#fff"/>
<line x1="461.5" y1="696" x2="461.5" y2="699" stroke="#fff"/>
<line x1="525.5" y1="696" x2="525.5" y2="699" stroke="#fff"/>
<line x1="589.5" y1="696" x2="589.5" y2="699" stroke="#fff"/>
<line x1="653.5" y1="696" x2="653.5" y2="699" stroke="#fff"/>
<line x1="717.5" y1="696" x2="717.5" y2="699" stroke="#fff"/>
<line x1="781.5" y1="696" x2="781.5" y2="699" stroke="#fff"/>
<line x1="845.5" y1="696" x2="845.5" y2="699" stroke="#fff"/>
<line x1="909.5" y1="696" x2="909.5" y2="699" stroke="#fff"/>
<line x1="973.5" y1="696" x2="973.5" y2="699" stroke="#fff"/>
<line x1="1037.5" y1="696" x2="1037.5" y2="699" stroke="#fff"/>
<line x1="1101.5" y1="696" x2="1101.5" y2="699" stroke="#fff"/>
<line x1="1165.5" y1="696" x2="1165.5" y2="699" stroke="#fff"/>
<line x1="1229.5" y1="696" x2="1229.5" y2="699" stroke="#fff"/>
<line x1="1293.5" y1="696" x2="1293.5" y2="699" stroke="#fff"/>
<g shape-rendering="auto" font-family="'Liberation Sans',sans-serif" font-size="9.7px" text-rendering="geometricPrecision" fill="#fff" stroke="#fff" stroke-width=".2" lengthAdjust="spacingAndGlyphs">
<text x="1338.3" y="85.0" textLength="27.8">1.5990</text>
<text x="1338.3" y="116.9" textLength="27.8">1.5610</text>
<text x="1338.3" y="148.9" textLength="27.8">1.5230</text>
<text x="1338.3" y="180.8" textLength="27.8">1.4850</text>
<text x="1338.3" y="212.7" textLength="27.8">1.4470</text>
<text x="1338.3" y="244.7" textLength="27.8">1.4080</text>
<text x="1338.3" y="276.6" textLength="27.8">1.3700</text>
<text x="1338.3" y="308.5" textLength="27.8">1.3320</text>
<text x="1338.3" y="340.4" textLength="27.8">1.2940</text>
<text x="1338.3" y="372.4" textLength="27.8">1.2560</text>
<text x="1338.3" y="404.3" textLength="27.8">1.2170</text>
<text x="1338.3" y="436.2" textLength="27.8">1.1790</text>
<text x="1338.3" y="468.2" textLength="27.8">1.1410</text>
<text x="1338.3" y="500.1" textLength="27.8">1.1030</text>
<text x="1338.3" y="533.0" textLength="27.8">1.0650</text>
<text x="12.1" y="708" textLength="46.2">1 Sep 2003</text>
<text x="76.1" y="708" textLength="44.5">1 Jan 2004</text>
<text x="140.1" y="708" textLength="49.4">1 May 2004</text>
<text x="204.1" y="708" textLength="46.2">1 Sep 2004</text>
<text x="268.1" y="708" textLength="44.5">1 Jan 2005</text>
<text x="332.1" y="708" textLength="49.4">1 May 2005</text>
<text x="396.1" y="708" textLength="46.2">1 Sep 2005</text>
<text x="460.1" y="708" textLength="44.5">1 Jan 2006</text>
<text x="524.1" y="708" textLength="49.4">1 May 2006</text>
<text x="588.1" y="708" textLength="46.2">1 Sep 2006</text>
<text x="652.1" y="708" textLength="44.5">1 Jan 2007</text>
<text x="716.1" y="708" textLength="49.4">1 May 2007</text>
<text x="780.1" y="708" textLength="46.2">1 Sep 2007</text>
<text x="844.1" y="708" textLength="44.5">1 Jan 2008</text>
<text x="908.1" y="708" textLength="49.4">1 May 2008</text>
<text x="972.1" y="708" textLength="46.2">1 Sep 2008</text>
<text x="1036.1" y="708" textLength="44.5">1 Jan 2009</text>
<text x="1100.1" y="708" textLength="49.4">1 May 2009</text>
<text x="1164.1" y="708" textLength="46.2">1 Sep 2009</text>
<text x="1228.1" y="708" textLength="44.5">1 Jan 2010</text>
<text x="1292.1" y="708" textLength="49.4">1 May 2010</text>
<rect x="16" y="58" width="206" height="9.5" fill="#000" stroke="none"/><rect x="16" y="541" width="70" height="7.3" fill="#000" stroke="none"/>
<text y="65.6"><tspan x="17.5" textLength="74.6" lengthAdjust="spacingAndGlyphs">EURUSD,Monthly</tspan> <tspan x="99.6" textLength="120.4" lengthAdjust="spacingAndGlyphs">1.3355 1.3359 1.2353 1.2357</tspan></text>
<text x="17.4" y="547.8" textLength="67.2" lengthAdjust="spacingAndGlyphs">RSI(14) 35.3800</text>
<text x="1244.3" y="67" textLength="69.8" lengthAdjust="spacingAndGlyphs">Moving Average</text>
<text x="1320" y="67" font-weight="bold" font-size="10px" textLength="6.6">×</text>
<text x="1336.7" y="544.7" textLength="14.2">100</text>
<text x="1335.3" y="585.6" textLength="9.6">70</text>
<text x="1335.3" y="617.6" textLength="9.6">50</text>
<text x="1335.3" y="649.6" textLength="9.6">30</text>
<text x="1335.5" y="692" textLength="4.8">0</text>
<clipPath id="c0"><rect x="1334" y="688" width="10" height="7"/></clipPath><text x="1335.5" y="697.5" textLength="4.8" clip-path="url(#c0)">0</text>
<g shape-rendering="crispEdges" stroke="none"><rect x="1334" y="381" width="36" height="11" fill="#fff"/><rect x="1334" y="442" width="36" height="11" fill="#f00"/><rect x="1334" y="634" width="38" height="11" fill="#f00"/></g>
<text x="1338.3" y="390.4" fill="#000" stroke="#000" textLength="27.8">1.2357</text>
<text x="1338.3" y="451" fill="#000" stroke="#000" textLength="27.8">1.1630</text>
<text x="1338.4" y="642.9" fill="#000" stroke="#000" textLength="32">34.3750</text>
</g>
<g shape-rendering="auto">
<clipPath id="ct"><rect x="1260" y="8" width="114" height="21"/></clipPath>
<g clip-path="url(#ct)">
<path d="M1272.5,0 V14 Q1272.5,19.5 1278,19.5 H1369 Q1374.5,19.5 1374.5,14 V0 Z" fill="url(#gb)" stroke="#fff" stroke-width="2.2" stroke-opacity=".7"/>
<path d="M1327.5,0 V19.5 H1369 Q1374.5,19.5 1374.5,14 V0 Z" fill="url(#go)"/>
<path d="M1272.5,0 V14 Q1272.5,19.5 1278,19.5 H1369 Q1374.5,19.5 1374.5,14 V0 M1300.5,0 V19.5 M1327.5,0 V19.5" fill="none" stroke="#3f4354" stroke-width="1"/>
<rect x="1281.5" y="10.8" width="11" height="3.8" rx=".8" fill="#fff" stroke="#454a5e" stroke-width="1"/>
<path d="M1308.5,4 V13 Q1308.5,14.6 1310,14.6 H1318 Q1319.5,14.6 1319.5,13 V4 Z" fill="#f4f4f6" stroke="#454a5e" stroke-width="1"/>
<rect x="1311.5" y="6" width="5" height="5.2" fill="#c8cacf" stroke="#454a5e" stroke-width="1"/>
<path d="M1346,6.6 L1349.3,6.6 L1351.6,9.2 L1353.9,6.6 L1357.2,6.6 L1353.5,10.7 L1357.2,14.7 L1353.9,14.7 L1351.6,12.2 L1349.3,14.7 L1346,14.7 L1349.7,10.7 Z" fill="#fff" stroke="#5a4a50" stroke-width=".9"/>
</g>
<rect x="1317.5" y="31.5" width="17" height="17" fill="#dce8f6" stroke="#a7bdd8" stroke-width="1"/>
<rect x="1336.5" y="31.5" width="17" height="17" fill="#dce8f6" stroke="#a7bdd8" stroke-width="1"/>
<rect x="1355.5" y="31.5" width="17" height="17" fill="#dce8f6" stroke="#a7bdd8" stroke-width="1"/>
<rect x="1322" y="41.6" width="6" height="2.4" fill="#5b6476"/>
<path d="M1343.5,36.8 H1348.5 V41.5 M1341.2,39.3 H1346.2 V43.8 H1341.2 Z" fill="none" stroke="#5b6476" stroke-width="1.4"/>
<path d="M1361,37 L1368,44 M1368,37 L1361,44" fill="none" stroke="#5b6476" stroke-width="2"/>
<rect x="13.6" y="32.7" width="10.8" height="8" rx="1" fill="#fff" stroke="#4a86fb" stroke-width="1.4" stroke-dasharray="1.3 .5"/>
<path d="M15.5,36.3 L16.8,35 L17.6,36.8 L19.6,35 L20.6,36.8 L22,36.8" fill="none" stroke="#4a86fb" stroke-width="1.1"/>
<rect x="16.7" y="38.3" width="9.8" height="7.3" rx="1" fill="#fff" stroke="#4a86fb" stroke-width="1.4" stroke-dasharray="1.3 .5"/>
<path d="M18.6,40.6 L20.4,43.4 L22,40.6 L23.2,41.2 L24.6,43.4" fill="none" stroke="#4a86fb" stroke-width="1.1" stroke-dasharray="1.4 .4"/>
<rect x="8" y="8" width="16" height="15" fill="#8cc63f"/>
<text x="9" y="17.5" font-family="'Liberation Sans',sans-serif" font-size="5.5px" font-style="italic" font-weight="bold" fill="#e6f3c8" textLength="14" lengthAdjust="spacingAndGlyphs">axm</text>
<rect x="93" y="713" width="103" height="20.5" fill="#fff"/>
<rect x="8.2" y="716" width="1.6" height="18" fill="#6e6e6e"/>
<path d="M8,715.5 H92.5 V733.5 H195.5 V715.5 H1374" fill="none" stroke="#111" stroke-width="1" shape-rendering="crispEdges"/>
<rect x="8" y="734" width="1366" height="2" fill="#fafafa"/>
<rect x="8" y="736" width="1366" height="1" fill="#454a52"/>
<line x1="276.5" y1="718" x2="276.5" y2="730" stroke="#70757d" stroke-width="1"/>
<line x1="353.5" y1="718" x2="353.5" y2="730" stroke="#70757d" stroke-width="1"/>
<line x1="432.5" y1="718" x2="432.5" y2="730" stroke="#70757d" stroke-width="1"/>
<line x1="520.5" y1="718" x2="520.5" y2="730" stroke="#70757d" stroke-width="1"/>
<line x1="600.5" y1="718" x2="600.5" y2="730" stroke="#70757d" stroke-width="1"/>
<line x1="676.5" y1="718" x2="676.5" y2="730" stroke="#70757d" stroke-width="1"/>
<line x1="776.5" y1="718" x2="776.5" y2="730" stroke="#70757d" stroke-width="1"/>
<line x1="844.5" y1="718" x2="844.5" y2="730" stroke="#70757d" stroke-width="1"/>
<path d="M1349.3,722 V728.4 L1345.2,725.2 Z M1362.8,722 V728.4 L1366.9,725.2 Z" fill="#a4a4a4"/>
<clipPath id="cb"><rect x="8" y="737" width="1366" height="7"/></clipPath><g clip-path="url(#cb)">
<circle cx="35" cy="755.7" r="17.6" fill="#c5cdd6" stroke="#27426e" stroke-width="1.2"/>
<rect x="84" y="742.6" width="13" height="4" fill="#e8a33d"/>
<rect x="205.5" y="740.5" width="32" height="10" rx="4" fill="#fbfbfb" stroke="#d8dde2"/>
<circle cx="282" cy="753" r="13" fill="#3f8fe0" stroke="#1c4f9c" stroke-width="1"/>
<rect x="315.5" y="737.5" width="59.0" height="12" rx="2" fill="#dde2e8" stroke="#1d2b4a" stroke-width="1"/>
<rect x="377.5" y="737.5" width="58.0" height="12" rx="2" fill="#dde2e8" stroke="#1d2b4a" stroke-width="1"/>
<rect x="439.5" y="737.5" width="54.0" height="12" rx="2" fill="#dde2e8" stroke="#1d2b4a" stroke-width="1"/>
<rect x="391" y="739.7" width="32" height="6" fill="#8cc63f"/>
<path d="M468,744 Q472,740 478,741.5" fill="none" stroke="#e8a33d" stroke-width="1.3"/>
<line x1="498.5" y1="737" x2="498.5" y2="744" stroke="#555c66"/>
<rect x="1360.5" y="737.5" width="13" height="10" fill="#b4b9bf" stroke="#e6e9ec"/>
</g>
</g>
</svg></div>
</body></html>
